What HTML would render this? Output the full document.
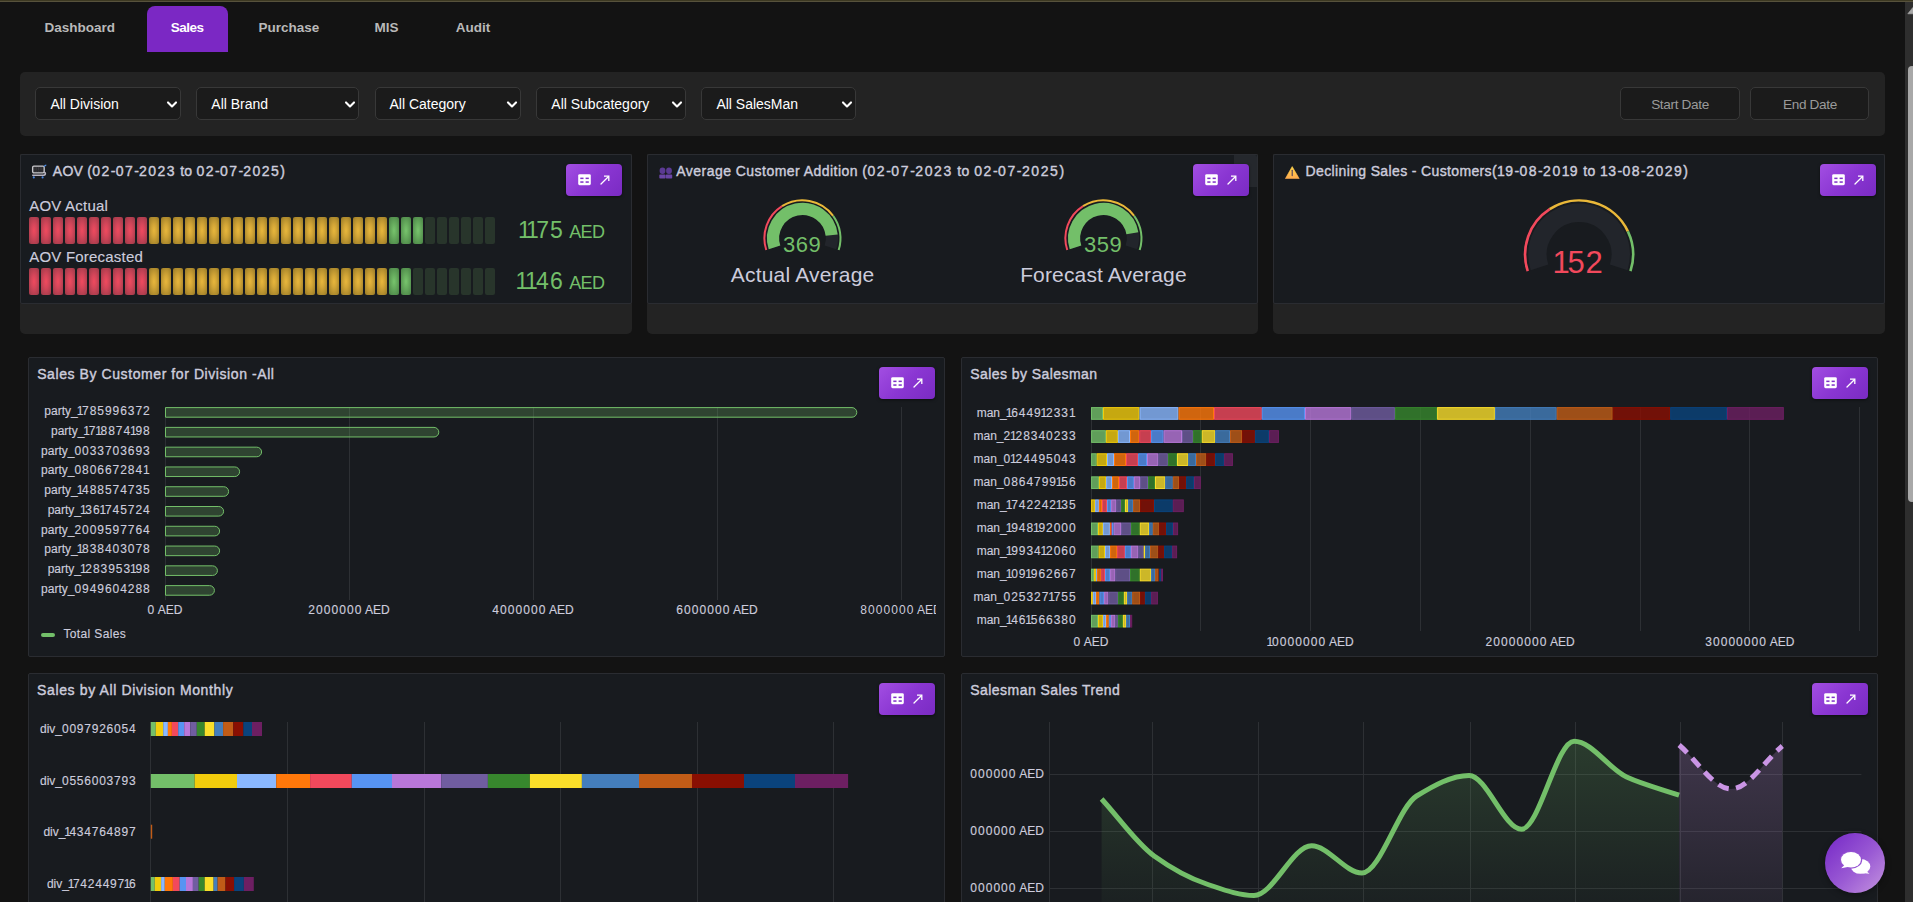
<!DOCTYPE html>
<html><head><meta charset="utf-8"><title>Sales</title>
<style>
*{box-sizing:border-box;margin:0;padding:0}
html,body{width:1913px;height:902px;overflow:hidden;background:#131313;font-family:"Liberation Sans",sans-serif}
.t{position:absolute;line-height:1;white-space:nowrap}
</style></head><body>

<div style="position:absolute;left:0.00px;top:0.00px;width:1913.00px;height:1.00px;background:#3d3922"></div>
<div style="position:absolute;left:0.00px;top:1.00px;width:1913.00px;height:1.00px;background:#57523c"></div>
<div class="t" style="left:-320.30px;width:800px;text-align:center;top:21.17px;font-size:13.5px;color:#b9b9b9;font-weight:bold;letter-spacing:0px;">Dashboard</div>
<div style="position:absolute;left:147.00px;top:6.00px;width:81.20px;height:46.00px;background:#7b28c4;border-radius:8px 8px 0 0"></div>
<div class="t" style="left:-212.90px;width:800px;text-align:center;top:21.17px;font-size:13.5px;color:#ffffff;font-weight:bold;letter-spacing:-0.5px;">Sales</div>
<div class="t" style="left:-111.00px;width:800px;text-align:center;top:21.17px;font-size:13.5px;color:#b9b9b9;font-weight:bold;letter-spacing:0px;">Purchase</div>
<div class="t" style="left:-13.50px;width:800px;text-align:center;top:21.17px;font-size:13.5px;color:#b9b9b9;font-weight:bold;letter-spacing:0px;">MIS</div>
<div class="t" style="left:73.00px;width:800px;text-align:center;top:21.17px;font-size:13.5px;color:#b9b9b9;font-weight:bold;letter-spacing:0px;">Audit</div>
<div style="position:absolute;left:20.00px;top:72.00px;width:1865.00px;height:63.50px;background:#232323;border-radius:5px"></div>
<div style="position:absolute;left:35.40px;top:87.40px;width:145.20px;height:33.00px;background:#1b1b1b;border:1px solid #383838;border-radius:5px"></div>
<div class="t" style="left:50.40px;top:97.45px;font-size:14px;color:#ffffff;font-weight:normal;letter-spacing:0px;">All Division</div>
<svg style="position:absolute;left:165.80px;top:99px" width="12" height="10" viewBox="0 0 12 10"><path d="M2 3.4 L6 7.4 L10 3.4" fill="none" stroke="#ffffff" stroke-width="2.1" stroke-linecap="round" stroke-linejoin="round"/></svg>
<div style="position:absolute;left:196.30px;top:87.40px;width:162.40px;height:33.00px;background:#1b1b1b;border:1px solid #383838;border-radius:5px"></div>
<div class="t" style="left:211.30px;top:97.45px;font-size:14px;color:#ffffff;font-weight:normal;letter-spacing:0px;">All Brand</div>
<svg style="position:absolute;left:343.90px;top:99px" width="12" height="10" viewBox="0 0 12 10"><path d="M2 3.4 L6 7.4 L10 3.4" fill="none" stroke="#ffffff" stroke-width="2.1" stroke-linecap="round" stroke-linejoin="round"/></svg>
<div style="position:absolute;left:374.50px;top:87.40px;width:146.50px;height:33.00px;background:#1b1b1b;border:1px solid #383838;border-radius:5px"></div>
<div class="t" style="left:389.50px;top:97.45px;font-size:14px;color:#ffffff;font-weight:normal;letter-spacing:0px;">All Category</div>
<svg style="position:absolute;left:506.20px;top:99px" width="12" height="10" viewBox="0 0 12 10"><path d="M2 3.4 L6 7.4 L10 3.4" fill="none" stroke="#ffffff" stroke-width="2.1" stroke-linecap="round" stroke-linejoin="round"/></svg>
<div style="position:absolute;left:536.30px;top:87.40px;width:149.30px;height:33.00px;background:#1b1b1b;border:1px solid #383838;border-radius:5px"></div>
<div class="t" style="left:551.30px;top:97.45px;font-size:14px;color:#ffffff;font-weight:normal;letter-spacing:0px;">All Subcategory</div>
<svg style="position:absolute;left:670.80px;top:99px" width="12" height="10" viewBox="0 0 12 10"><path d="M2 3.4 L6 7.4 L10 3.4" fill="none" stroke="#ffffff" stroke-width="2.1" stroke-linecap="round" stroke-linejoin="round"/></svg>
<div style="position:absolute;left:701.40px;top:87.40px;width:154.60px;height:33.00px;background:#1b1b1b;border:1px solid #383838;border-radius:5px"></div>
<div class="t" style="left:716.40px;top:97.45px;font-size:14px;color:#ffffff;font-weight:normal;letter-spacing:0px;">All SalesMan</div>
<svg style="position:absolute;left:841.20px;top:99px" width="12" height="10" viewBox="0 0 12 10"><path d="M2 3.4 L6 7.4 L10 3.4" fill="none" stroke="#ffffff" stroke-width="2.1" stroke-linecap="round" stroke-linejoin="round"/></svg>
<div style="position:absolute;left:1620.30px;top:87.40px;width:119.40px;height:33.00px;background:#1b1b1b;border:1px solid #383838;border-radius:5px"></div>
<div class="t" style="left:1280.00px;width:800px;text-align:center;top:97.99px;font-size:13.6px;color:#9a9a9a;font-weight:normal;letter-spacing:-0.35px;">Start Date</div>
<div style="position:absolute;left:1750.40px;top:87.40px;width:119.10px;height:33.00px;background:#1b1b1b;border:1px solid #383838;border-radius:5px"></div>
<div class="t" style="left:1409.95px;width:800px;text-align:center;top:97.99px;font-size:13.6px;color:#9a9a9a;font-weight:normal;letter-spacing:-0.35px;">End Date</div>
<div style="position:absolute;left:20.00px;top:154.20px;width:612.00px;height:179.80px;background:#232323;border-radius:0 0 5px 5px"></div>
<div style="position:absolute;left:20.00px;top:154.20px;width:612.00px;height:149.80px;background:#181b1f;border:1px solid #2a2c31;border-radius:2px"></div>
<div style="position:absolute;left:647.20px;top:154.20px;width:610.40px;height:179.80px;background:#232323;border-radius:0 0 5px 5px"></div>
<div style="position:absolute;left:647.20px;top:154.20px;width:610.40px;height:149.80px;background:#181b1f;border:1px solid #2a2c31;border-radius:2px"></div>
<div style="position:absolute;left:1273.00px;top:154.20px;width:612.00px;height:179.80px;background:#232323;border-radius:0 0 5px 5px"></div>
<div style="position:absolute;left:1273.00px;top:154.20px;width:612.00px;height:149.80px;background:#181b1f;border:1px solid #2a2c31;border-radius:2px"></div>
<svg style="position:absolute;left:30px;top:163px" width="18" height="17" viewBox="0 0 18 17"><rect x="2.6" y="3.2" width="11.6" height="6.6" rx="1.3" fill="#3a3a3e" stroke="#c8c8cc" stroke-width="1.3"/><path d="M5 4 V9 M7.4 4 V9 M9.8 4 V9 M12.2 4 V9" stroke="#2a2a2e" stroke-width="1.2"/><path d="M4.2 7.6 H12.6" stroke="#2a2a2e" stroke-width="0.9"/><path d="M14.2 3.2 L15.8 2.2" stroke="#4f8fe8" stroke-width="1.3" stroke-linecap="round"/><path d="M2.2 12.2 H13.6 Q15.6 12 15.4 10.4 Q15.2 9.2 14 9.4" fill="none" stroke="#b8b4c0" stroke-width="1.5"/><circle cx="3.8" cy="14.4" r="1.05" fill="#4a86e0"/><circle cx="12.6" cy="14.4" r="1.05" fill="#4a86e0"/></svg>
<div class="t" style="left:52.80px;top:164.05px;font-size:14px;color:#ccccdc;font-weight:normal;letter-spacing:0.28px;-webkit-text-stroke:0.4px #ccccdc;">AOV (<span style="margin-right:1.15px">0</span><span style="margin-right:1.15px">2</span>-<span style="margin-right:1.15px">0</span><span style="margin-right:1.15px">7</span>-<span style="margin-right:1.15px">2</span><span style="margin-right:1.15px">0</span><span style="margin-right:1.15px">2</span><span style="margin-right:1.15px">3</span> to <span style="margin-right:1.15px">0</span><span style="margin-right:1.15px">2</span>-<span style="margin-right:1.15px">0</span><span style="margin-right:1.15px">7</span>-<span style="margin-right:1.15px">2</span><span style="margin-right:1.15px">0</span><span style="margin-right:1.15px">2</span><span style="margin-right:1.15px">5</span>)</div>
<div style="position:absolute;left:566.00px;top:163.80px;width:56px;height:32px;border-radius:4px;background:linear-gradient(135deg,#a24ee2 0%,#8a36d2 50%,#7a2bc3 100%);box-shadow:0 1px 3px rgba(0,0,0,0.5)"></div>
<svg style="position:absolute;left:578.00px;top:173.80px" width="14" height="12" viewBox="0 0 14 12"><rect x="0.2" y="0.2" width="12.6" height="11" rx="1.4" fill="#fff"/><rect x="2.3" y="3.6" width="3.2" height="1.5" fill="#7f2fc9"/><rect x="7.6" y="3.6" width="3.2" height="1.5" fill="#7f2fc9"/><rect x="2.3" y="7.3" width="3.2" height="1.5" fill="#7f2fc9"/><rect x="7.6" y="7.3" width="3.2" height="1.5" fill="#7f2fc9"/></svg>
<svg style="position:absolute;left:600.00px;top:174.80px" width="10" height="10" viewBox="0 0 10 10"><path d="M1 9 L8.3 1.7" stroke="#fff" stroke-width="1.3" stroke-linecap="round"/><path d="M4 1.2 L8.8 1.2 L8.8 6" fill="none" stroke="#fff" stroke-width="1.3" stroke-linejoin="miter"/></svg>
<div class="t" style="left:29.30px;top:198.20px;font-size:15px;color:#ccccdc;font-weight:normal;letter-spacing:0.2px;-webkit-text-stroke:0.15px #ccccdc;">AOV Actual</div>
<div style="position:absolute;left:29px;top:217.00px;width:10px;height:27.00px;border-radius:2px;background:radial-gradient(ellipse 62% 58% at 50% 50%,#f04a5e 0%,#d6465a 40%,#a83c4c 100%)"></div>
<div style="position:absolute;left:41px;top:217.00px;width:10px;height:27.00px;border-radius:2px;background:radial-gradient(ellipse 62% 58% at 50% 50%,#f04a5e 0%,#d6465a 40%,#a83c4c 100%)"></div>
<div style="position:absolute;left:53px;top:217.00px;width:10px;height:27.00px;border-radius:2px;background:radial-gradient(ellipse 62% 58% at 50% 50%,#f04a5e 0%,#d6465a 40%,#a83c4c 100%)"></div>
<div style="position:absolute;left:65px;top:217.00px;width:10px;height:27.00px;border-radius:2px;background:radial-gradient(ellipse 62% 58% at 50% 50%,#f04a5e 0%,#d6465a 40%,#a83c4c 100%)"></div>
<div style="position:absolute;left:77px;top:217.00px;width:10px;height:27.00px;border-radius:2px;background:radial-gradient(ellipse 62% 58% at 50% 50%,#f04a5e 0%,#d6465a 40%,#a83c4c 100%)"></div>
<div style="position:absolute;left:89px;top:217.00px;width:10px;height:27.00px;border-radius:2px;background:radial-gradient(ellipse 62% 58% at 50% 50%,#f04a5e 0%,#d6465a 40%,#a83c4c 100%)"></div>
<div style="position:absolute;left:101px;top:217.00px;width:10px;height:27.00px;border-radius:2px;background:radial-gradient(ellipse 62% 58% at 50% 50%,#f04a5e 0%,#d6465a 40%,#a83c4c 100%)"></div>
<div style="position:absolute;left:113px;top:217.00px;width:10px;height:27.00px;border-radius:2px;background:radial-gradient(ellipse 62% 58% at 50% 50%,#f04a5e 0%,#d6465a 40%,#a83c4c 100%)"></div>
<div style="position:absolute;left:125px;top:217.00px;width:10px;height:27.00px;border-radius:2px;background:radial-gradient(ellipse 62% 58% at 50% 50%,#f04a5e 0%,#d6465a 40%,#a83c4c 100%)"></div>
<div style="position:absolute;left:137px;top:217.00px;width:10px;height:27.00px;border-radius:2px;background:radial-gradient(ellipse 62% 58% at 50% 50%,#f04a5e 0%,#d6465a 40%,#a83c4c 100%)"></div>
<div style="position:absolute;left:149px;top:217.00px;width:10px;height:27.00px;border-radius:2px;background:radial-gradient(ellipse 62% 58% at 50% 50%,#e8b73c 0%,#d2a536 40%,#a4832a 100%)"></div>
<div style="position:absolute;left:161px;top:217.00px;width:10px;height:27.00px;border-radius:2px;background:radial-gradient(ellipse 62% 58% at 50% 50%,#e8b73c 0%,#d2a536 40%,#a4832a 100%)"></div>
<div style="position:absolute;left:173px;top:217.00px;width:10px;height:27.00px;border-radius:2px;background:radial-gradient(ellipse 62% 58% at 50% 50%,#e8b73c 0%,#d2a536 40%,#a4832a 100%)"></div>
<div style="position:absolute;left:185px;top:217.00px;width:10px;height:27.00px;border-radius:2px;background:radial-gradient(ellipse 62% 58% at 50% 50%,#e8b73c 0%,#d2a536 40%,#a4832a 100%)"></div>
<div style="position:absolute;left:197px;top:217.00px;width:10px;height:27.00px;border-radius:2px;background:radial-gradient(ellipse 62% 58% at 50% 50%,#e8b73c 0%,#d2a536 40%,#a4832a 100%)"></div>
<div style="position:absolute;left:209px;top:217.00px;width:10px;height:27.00px;border-radius:2px;background:radial-gradient(ellipse 62% 58% at 50% 50%,#e8b73c 0%,#d2a536 40%,#a4832a 100%)"></div>
<div style="position:absolute;left:221px;top:217.00px;width:10px;height:27.00px;border-radius:2px;background:radial-gradient(ellipse 62% 58% at 50% 50%,#e8b73c 0%,#d2a536 40%,#a4832a 100%)"></div>
<div style="position:absolute;left:233px;top:217.00px;width:10px;height:27.00px;border-radius:2px;background:radial-gradient(ellipse 62% 58% at 50% 50%,#e8b73c 0%,#d2a536 40%,#a4832a 100%)"></div>
<div style="position:absolute;left:245px;top:217.00px;width:10px;height:27.00px;border-radius:2px;background:radial-gradient(ellipse 62% 58% at 50% 50%,#e8b73c 0%,#d2a536 40%,#a4832a 100%)"></div>
<div style="position:absolute;left:257px;top:217.00px;width:10px;height:27.00px;border-radius:2px;background:radial-gradient(ellipse 62% 58% at 50% 50%,#e8b73c 0%,#d2a536 40%,#a4832a 100%)"></div>
<div style="position:absolute;left:269px;top:217.00px;width:10px;height:27.00px;border-radius:2px;background:radial-gradient(ellipse 62% 58% at 50% 50%,#e8b73c 0%,#d2a536 40%,#a4832a 100%)"></div>
<div style="position:absolute;left:281px;top:217.00px;width:10px;height:27.00px;border-radius:2px;background:radial-gradient(ellipse 62% 58% at 50% 50%,#e8b73c 0%,#d2a536 40%,#a4832a 100%)"></div>
<div style="position:absolute;left:293px;top:217.00px;width:10px;height:27.00px;border-radius:2px;background:radial-gradient(ellipse 62% 58% at 50% 50%,#e8b73c 0%,#d2a536 40%,#a4832a 100%)"></div>
<div style="position:absolute;left:305px;top:217.00px;width:10px;height:27.00px;border-radius:2px;background:radial-gradient(ellipse 62% 58% at 50% 50%,#e8b73c 0%,#d2a536 40%,#a4832a 100%)"></div>
<div style="position:absolute;left:317px;top:217.00px;width:10px;height:27.00px;border-radius:2px;background:radial-gradient(ellipse 62% 58% at 50% 50%,#e8b73c 0%,#d2a536 40%,#a4832a 100%)"></div>
<div style="position:absolute;left:329px;top:217.00px;width:10px;height:27.00px;border-radius:2px;background:radial-gradient(ellipse 62% 58% at 50% 50%,#e8b73c 0%,#d2a536 40%,#a4832a 100%)"></div>
<div style="position:absolute;left:341px;top:217.00px;width:10px;height:27.00px;border-radius:2px;background:radial-gradient(ellipse 62% 58% at 50% 50%,#e8b73c 0%,#d2a536 40%,#a4832a 100%)"></div>
<div style="position:absolute;left:353px;top:217.00px;width:10px;height:27.00px;border-radius:2px;background:radial-gradient(ellipse 62% 58% at 50% 50%,#e8b73c 0%,#d2a536 40%,#a4832a 100%)"></div>
<div style="position:absolute;left:365px;top:217.00px;width:10px;height:27.00px;border-radius:2px;background:radial-gradient(ellipse 62% 58% at 50% 50%,#e8b73c 0%,#d2a536 40%,#a4832a 100%)"></div>
<div style="position:absolute;left:377px;top:217.00px;width:10px;height:27.00px;border-radius:2px;background:radial-gradient(ellipse 62% 58% at 50% 50%,#e8b73c 0%,#d2a536 40%,#a4832a 100%)"></div>
<div style="position:absolute;left:389px;top:217.00px;width:10px;height:27.00px;border-radius:2px;background:radial-gradient(ellipse 62% 58% at 50% 50%,#78c46d 0%,#68ae5f 40%,#508c4b 100%)"></div>
<div style="position:absolute;left:401px;top:217.00px;width:10px;height:27.00px;border-radius:2px;background:radial-gradient(ellipse 62% 58% at 50% 50%,#78c46d 0%,#68ae5f 40%,#508c4b 100%)"></div>
<div style="position:absolute;left:413px;top:217.00px;width:10px;height:27.00px;border-radius:2px;background:radial-gradient(ellipse 62% 58% at 50% 50%,#78c46d 0%,#68ae5f 40%,#508c4b 100%)"></div>
<div style="position:absolute;left:425px;top:217.00px;width:10px;height:27.00px;border-radius:2px;background:#28352b"></div>
<div style="position:absolute;left:437px;top:217.00px;width:10px;height:27.00px;border-radius:2px;background:#28352b"></div>
<div style="position:absolute;left:449px;top:217.00px;width:10px;height:27.00px;border-radius:2px;background:#28352b"></div>
<div style="position:absolute;left:461px;top:217.00px;width:10px;height:27.00px;border-radius:2px;background:#28352b"></div>
<div style="position:absolute;left:473px;top:217.00px;width:10px;height:27.00px;border-radius:2px;background:#28352b"></div>
<div style="position:absolute;left:485px;top:217.00px;width:10px;height:27.00px;border-radius:2px;background:#28352b"></div>
<div class="t" style="right:1350.20px;top:218.53px;font-size:23px;color:#73BF69;font-weight:normal;letter-spacing:0px;"><span style="margin-left:-2.12px;margin-right:-2.59px">1</span><span style="margin-left:-2.12px;margin-right:-2.59px">1</span><span style="margin-right:1.0px">7</span>5</div>
<div class="t" style="right:1308.60px;top:222.76px;font-size:18px;color:#73BF69;font-weight:normal;letter-spacing:-0.6px;">AED</div>
<div class="t" style="left:29.30px;top:249.30px;font-size:15px;color:#ccccdc;font-weight:normal;letter-spacing:0.2px;-webkit-text-stroke:0.15px #ccccdc;">AOV Forecasted</div>
<div style="position:absolute;left:29px;top:268.20px;width:10px;height:26.60px;border-radius:2px;background:radial-gradient(ellipse 62% 58% at 50% 50%,#f04a5e 0%,#d6465a 40%,#a83c4c 100%)"></div>
<div style="position:absolute;left:41px;top:268.20px;width:10px;height:26.60px;border-radius:2px;background:radial-gradient(ellipse 62% 58% at 50% 50%,#f04a5e 0%,#d6465a 40%,#a83c4c 100%)"></div>
<div style="position:absolute;left:53px;top:268.20px;width:10px;height:26.60px;border-radius:2px;background:radial-gradient(ellipse 62% 58% at 50% 50%,#f04a5e 0%,#d6465a 40%,#a83c4c 100%)"></div>
<div style="position:absolute;left:65px;top:268.20px;width:10px;height:26.60px;border-radius:2px;background:radial-gradient(ellipse 62% 58% at 50% 50%,#f04a5e 0%,#d6465a 40%,#a83c4c 100%)"></div>
<div style="position:absolute;left:77px;top:268.20px;width:10px;height:26.60px;border-radius:2px;background:radial-gradient(ellipse 62% 58% at 50% 50%,#f04a5e 0%,#d6465a 40%,#a83c4c 100%)"></div>
<div style="position:absolute;left:89px;top:268.20px;width:10px;height:26.60px;border-radius:2px;background:radial-gradient(ellipse 62% 58% at 50% 50%,#f04a5e 0%,#d6465a 40%,#a83c4c 100%)"></div>
<div style="position:absolute;left:101px;top:268.20px;width:10px;height:26.60px;border-radius:2px;background:radial-gradient(ellipse 62% 58% at 50% 50%,#f04a5e 0%,#d6465a 40%,#a83c4c 100%)"></div>
<div style="position:absolute;left:113px;top:268.20px;width:10px;height:26.60px;border-radius:2px;background:radial-gradient(ellipse 62% 58% at 50% 50%,#f04a5e 0%,#d6465a 40%,#a83c4c 100%)"></div>
<div style="position:absolute;left:125px;top:268.20px;width:10px;height:26.60px;border-radius:2px;background:radial-gradient(ellipse 62% 58% at 50% 50%,#f04a5e 0%,#d6465a 40%,#a83c4c 100%)"></div>
<div style="position:absolute;left:137px;top:268.20px;width:10px;height:26.60px;border-radius:2px;background:radial-gradient(ellipse 62% 58% at 50% 50%,#f04a5e 0%,#d6465a 40%,#a83c4c 100%)"></div>
<div style="position:absolute;left:149px;top:268.20px;width:10px;height:26.60px;border-radius:2px;background:radial-gradient(ellipse 62% 58% at 50% 50%,#e8b73c 0%,#d2a536 40%,#a4832a 100%)"></div>
<div style="position:absolute;left:161px;top:268.20px;width:10px;height:26.60px;border-radius:2px;background:radial-gradient(ellipse 62% 58% at 50% 50%,#e8b73c 0%,#d2a536 40%,#a4832a 100%)"></div>
<div style="position:absolute;left:173px;top:268.20px;width:10px;height:26.60px;border-radius:2px;background:radial-gradient(ellipse 62% 58% at 50% 50%,#e8b73c 0%,#d2a536 40%,#a4832a 100%)"></div>
<div style="position:absolute;left:185px;top:268.20px;width:10px;height:26.60px;border-radius:2px;background:radial-gradient(ellipse 62% 58% at 50% 50%,#e8b73c 0%,#d2a536 40%,#a4832a 100%)"></div>
<div style="position:absolute;left:197px;top:268.20px;width:10px;height:26.60px;border-radius:2px;background:radial-gradient(ellipse 62% 58% at 50% 50%,#e8b73c 0%,#d2a536 40%,#a4832a 100%)"></div>
<div style="position:absolute;left:209px;top:268.20px;width:10px;height:26.60px;border-radius:2px;background:radial-gradient(ellipse 62% 58% at 50% 50%,#e8b73c 0%,#d2a536 40%,#a4832a 100%)"></div>
<div style="position:absolute;left:221px;top:268.20px;width:10px;height:26.60px;border-radius:2px;background:radial-gradient(ellipse 62% 58% at 50% 50%,#e8b73c 0%,#d2a536 40%,#a4832a 100%)"></div>
<div style="position:absolute;left:233px;top:268.20px;width:10px;height:26.60px;border-radius:2px;background:radial-gradient(ellipse 62% 58% at 50% 50%,#e8b73c 0%,#d2a536 40%,#a4832a 100%)"></div>
<div style="position:absolute;left:245px;top:268.20px;width:10px;height:26.60px;border-radius:2px;background:radial-gradient(ellipse 62% 58% at 50% 50%,#e8b73c 0%,#d2a536 40%,#a4832a 100%)"></div>
<div style="position:absolute;left:257px;top:268.20px;width:10px;height:26.60px;border-radius:2px;background:radial-gradient(ellipse 62% 58% at 50% 50%,#e8b73c 0%,#d2a536 40%,#a4832a 100%)"></div>
<div style="position:absolute;left:269px;top:268.20px;width:10px;height:26.60px;border-radius:2px;background:radial-gradient(ellipse 62% 58% at 50% 50%,#e8b73c 0%,#d2a536 40%,#a4832a 100%)"></div>
<div style="position:absolute;left:281px;top:268.20px;width:10px;height:26.60px;border-radius:2px;background:radial-gradient(ellipse 62% 58% at 50% 50%,#e8b73c 0%,#d2a536 40%,#a4832a 100%)"></div>
<div style="position:absolute;left:293px;top:268.20px;width:10px;height:26.60px;border-radius:2px;background:radial-gradient(ellipse 62% 58% at 50% 50%,#e8b73c 0%,#d2a536 40%,#a4832a 100%)"></div>
<div style="position:absolute;left:305px;top:268.20px;width:10px;height:26.60px;border-radius:2px;background:radial-gradient(ellipse 62% 58% at 50% 50%,#e8b73c 0%,#d2a536 40%,#a4832a 100%)"></div>
<div style="position:absolute;left:317px;top:268.20px;width:10px;height:26.60px;border-radius:2px;background:radial-gradient(ellipse 62% 58% at 50% 50%,#e8b73c 0%,#d2a536 40%,#a4832a 100%)"></div>
<div style="position:absolute;left:329px;top:268.20px;width:10px;height:26.60px;border-radius:2px;background:radial-gradient(ellipse 62% 58% at 50% 50%,#e8b73c 0%,#d2a536 40%,#a4832a 100%)"></div>
<div style="position:absolute;left:341px;top:268.20px;width:10px;height:26.60px;border-radius:2px;background:radial-gradient(ellipse 62% 58% at 50% 50%,#e8b73c 0%,#d2a536 40%,#a4832a 100%)"></div>
<div style="position:absolute;left:353px;top:268.20px;width:10px;height:26.60px;border-radius:2px;background:radial-gradient(ellipse 62% 58% at 50% 50%,#e8b73c 0%,#d2a536 40%,#a4832a 100%)"></div>
<div style="position:absolute;left:365px;top:268.20px;width:10px;height:26.60px;border-radius:2px;background:radial-gradient(ellipse 62% 58% at 50% 50%,#e8b73c 0%,#d2a536 40%,#a4832a 100%)"></div>
<div style="position:absolute;left:377px;top:268.20px;width:10px;height:26.60px;border-radius:2px;background:radial-gradient(ellipse 62% 58% at 50% 50%,#e8b73c 0%,#d2a536 40%,#a4832a 100%)"></div>
<div style="position:absolute;left:389px;top:268.20px;width:10px;height:26.60px;border-radius:2px;background:radial-gradient(ellipse 62% 58% at 50% 50%,#78c46d 0%,#68ae5f 40%,#508c4b 100%)"></div>
<div style="position:absolute;left:401px;top:268.20px;width:10px;height:26.60px;border-radius:2px;background:radial-gradient(ellipse 62% 58% at 50% 50%,#78c46d 0%,#68ae5f 40%,#508c4b 100%)"></div>
<div style="position:absolute;left:413px;top:268.20px;width:10px;height:26.60px;border-radius:2px;background:#28352b"></div>
<div style="position:absolute;left:425px;top:268.20px;width:10px;height:26.60px;border-radius:2px;background:#28352b"></div>
<div style="position:absolute;left:437px;top:268.20px;width:10px;height:26.60px;border-radius:2px;background:#28352b"></div>
<div style="position:absolute;left:449px;top:268.20px;width:10px;height:26.60px;border-radius:2px;background:#28352b"></div>
<div style="position:absolute;left:461px;top:268.20px;width:10px;height:26.60px;border-radius:2px;background:#28352b"></div>
<div style="position:absolute;left:473px;top:268.20px;width:10px;height:26.60px;border-radius:2px;background:#28352b"></div>
<div style="position:absolute;left:485px;top:268.20px;width:10px;height:26.60px;border-radius:2px;background:#28352b"></div>
<div class="t" style="right:1350.20px;top:269.83px;font-size:23px;color:#73BF69;font-weight:normal;letter-spacing:0px;"><span style="margin-left:-1.44px;margin-right:-1.76px">1</span><span style="margin-left:-1.44px;margin-right:-1.76px">1</span><span style="margin-right:1.2px">4</span>6</div>
<div class="t" style="right:1308.60px;top:274.06px;font-size:18px;color:#73BF69;font-weight:normal;letter-spacing:-0.6px;">AED</div>
<svg style="position:absolute;left:659px;top:166.5px" width="14" height="12" viewBox="0 0 14 12"><ellipse cx="3.5" cy="3.8" rx="2.9" ry="3.3" fill="#5b3a93"/><ellipse cx="10" cy="3.8" rx="2.9" ry="3.3" fill="#5b3a93"/><rect x="0.3" y="7.6" width="6.3" height="4" rx="0.8" fill="#6a45a6"/><rect x="6.8" y="7.6" width="6.4" height="4" rx="0.8" fill="#6a45a6"/></svg>
<div class="t" style="left:676.30px;top:164.05px;font-size:14px;color:#ccccdc;font-weight:normal;letter-spacing:0.46px;-webkit-text-stroke:0.4px #ccccdc;">Average Customer Addition (<span style="margin-right:1.15px">0</span><span style="margin-right:1.15px">2</span>-<span style="margin-right:1.15px">0</span><span style="margin-right:1.15px">7</span>-<span style="margin-right:1.15px">2</span><span style="margin-right:1.15px">0</span><span style="margin-right:1.15px">2</span><span style="margin-right:1.15px">3</span> to <span style="margin-right:1.15px">0</span><span style="margin-right:1.15px">2</span>-<span style="margin-right:1.15px">0</span><span style="margin-right:1.15px">7</span>-<span style="margin-right:1.15px">2</span><span style="margin-right:1.15px">0</span><span style="margin-right:1.15px">2</span><span style="margin-right:1.15px">5</span>)</div>
<div style="position:absolute;left:1234.00px;top:155.00px;width:23.00px;height:31.60px;background:#25282d;border-radius:0 2px 0 0"></div>
<div style="position:absolute;left:1193.00px;top:164.00px;width:56px;height:32px;border-radius:4px;background:linear-gradient(135deg,#a24ee2 0%,#8a36d2 50%,#7a2bc3 100%);box-shadow:0 1px 3px rgba(0,0,0,0.5)"></div>
<svg style="position:absolute;left:1205.00px;top:174.00px" width="14" height="12" viewBox="0 0 14 12"><rect x="0.2" y="0.2" width="12.6" height="11" rx="1.4" fill="#fff"/><rect x="2.3" y="3.6" width="3.2" height="1.5" fill="#7f2fc9"/><rect x="7.6" y="3.6" width="3.2" height="1.5" fill="#7f2fc9"/><rect x="2.3" y="7.3" width="3.2" height="1.5" fill="#7f2fc9"/><rect x="7.6" y="7.3" width="3.2" height="1.5" fill="#7f2fc9"/></svg>
<svg style="position:absolute;left:1227.00px;top:175.00px" width="10" height="10" viewBox="0 0 10 10"><path d="M1 9 L8.3 1.7" stroke="#fff" stroke-width="1.3" stroke-linecap="round"/><path d="M4 1.2 L8.8 1.2 L8.8 6" fill="none" stroke="#fff" stroke-width="1.3" stroke-linejoin="miter"/></svg>
<svg style="position:absolute;left:0;top:0" width="1913" height="902"><path d="M766.26 250.06 A38.05 38.05 0 0 1 782.01 206.21" fill="none" stroke="#F2495C" stroke-width="2.0"/><path d="M782.01 206.21 A38.05 38.05 0 0 1 833.15 215.83" fill="none" stroke="#EAB839" stroke-width="2.0"/><path d="M833.15 215.83 A38.05 38.05 0 0 1 838.64 250.06" fill="none" stroke="#73BF69" stroke-width="2.0"/><path d="M774.51 247.38 A29.375 29.375 0 1 1 830.39 247.38" fill="none" stroke="#22252b" stroke-width="12.149999999999995"/><path d="M774.51 247.38 A29.375 29.375 0 1 1 831.66 235.23" fill="none" stroke="#73BF69" stroke-width="12.149999999999995"/></svg>
<svg style="position:absolute;left:0;top:0" width="1913" height="902"><path d="M1067.26 250.06 A38.05 38.05 0 0 1 1083.01 206.21" fill="none" stroke="#F2495C" stroke-width="2.0"/><path d="M1083.01 206.21 A38.05 38.05 0 0 1 1134.15 215.83" fill="none" stroke="#EAB839" stroke-width="2.0"/><path d="M1134.15 215.83 A38.05 38.05 0 0 1 1139.64 250.06" fill="none" stroke="#73BF69" stroke-width="2.0"/><path d="M1075.51 247.38 A29.375 29.375 0 1 1 1131.39 247.38" fill="none" stroke="#22252b" stroke-width="12.149999999999995"/><path d="M1075.51 247.38 A29.375 29.375 0 1 1 1132.38 233.20" fill="none" stroke="#73BF69" stroke-width="12.149999999999995"/></svg>
<div class="t" style="left:402.20px;width:800px;text-align:center;top:234.28px;font-size:22px;color:#73BF69;font-weight:normal;letter-spacing:0.5px;">369</div>
<div class="t" style="left:703.20px;width:800px;text-align:center;top:234.28px;font-size:22px;color:#73BF69;font-weight:normal;letter-spacing:0.5px;">359</div>
<div class="t" style="left:402.60px;width:800px;text-align:center;top:264.42px;font-size:21px;color:#ccccdc;font-weight:normal;letter-spacing:0.2px;">Actual Average</div>
<div class="t" style="left:703.45px;width:800px;text-align:center;top:264.42px;font-size:21px;color:#ccccdc;font-weight:normal;letter-spacing:0.15px;">Forecast Average</div>
<svg style="position:absolute;left:1284.5px;top:165.5px" width="15" height="13" viewBox="0 0 15 13"><defs><linearGradient id="wg" x1="0" y1="0" x2="0" y2="1"><stop offset="0" stop-color="#ffd54a"/><stop offset="1" stop-color="#ffab4f"/></linearGradient></defs><path d="M7.2 0.6 L14.2 12.6 H0.4 Z" fill="url(#wg)" stroke="url(#wg)" stroke-width="0.6" stroke-linejoin="round"/><path d="M7.2 4.2 V9.6" stroke="#4a3d5c" stroke-width="1.1" stroke-linecap="round"/></svg>
<div class="t" style="left:1305.60px;top:164.05px;font-size:14px;color:#ccccdc;font-weight:normal;letter-spacing:0.36px;-webkit-text-stroke:0.4px #ccccdc;">Declining Sales - Customers(<span style="margin-left:0.00px;margin-right:0.00px">1</span><span style="margin-right:1.15px">9</span>-<span style="margin-right:1.15px">0</span><span style="margin-right:1.15px">8</span>-<span style="margin-right:1.15px">2</span><span style="margin-right:1.15px">0</span><span style="margin-left:0.00px;margin-right:0.00px">1</span><span style="margin-right:1.15px">9</span> to <span style="margin-left:0.00px;margin-right:0.00px">1</span><span style="margin-right:1.15px">3</span>-<span style="margin-right:1.15px">0</span><span style="margin-right:1.15px">8</span>-<span style="margin-right:1.15px">2</span><span style="margin-right:1.15px">0</span><span style="margin-right:1.15px">2</span><span style="margin-right:1.15px">9</span>)</div>
<div style="position:absolute;left:1820.00px;top:163.80px;width:56px;height:32px;border-radius:4px;background:linear-gradient(135deg,#a24ee2 0%,#8a36d2 50%,#7a2bc3 100%);box-shadow:0 1px 3px rgba(0,0,0,0.5)"></div>
<svg style="position:absolute;left:1832.00px;top:173.80px" width="14" height="12" viewBox="0 0 14 12"><rect x="0.2" y="0.2" width="12.6" height="11" rx="1.4" fill="#fff"/><rect x="2.3" y="3.6" width="3.2" height="1.5" fill="#7f2fc9"/><rect x="7.6" y="3.6" width="3.2" height="1.5" fill="#7f2fc9"/><rect x="2.3" y="7.3" width="3.2" height="1.5" fill="#7f2fc9"/><rect x="7.6" y="7.3" width="3.2" height="1.5" fill="#7f2fc9"/></svg>
<svg style="position:absolute;left:1854.00px;top:174.80px" width="10" height="10" viewBox="0 0 10 10"><path d="M1 9 L8.3 1.7" stroke="#fff" stroke-width="1.3" stroke-linecap="round"/><path d="M4 1.2 L8.8 1.2 L8.8 6" fill="none" stroke="#fff" stroke-width="1.3" stroke-linejoin="miter"/></svg>
<svg style="position:absolute;left:0;top:0" width="1913" height="902"><path d="M1527.74 271.19 A54.0 54.0 0 0 1 1549.69 209.21" fill="none" stroke="#F2495C" stroke-width="2.6"/><path d="M1549.69 209.21 A54.0 54.0 0 0 1 1627.88 231.34" fill="none" stroke="#EAB839" stroke-width="2.6"/><path d="M1627.88 231.34 A54.0 54.0 0 0 1 1630.46 271.19" fill="none" stroke="#73BF69" stroke-width="2.6"/><path d="M1539.49 267.37 A41.65 41.65 0 1 1 1618.71 267.37" fill="none" stroke="#22252b" stroke-width="18.5"/></svg>
<div class="t" style="left:1178.50px;width:800px;text-align:center;top:247.46px;font-size:31px;color:#F2495C;font-weight:normal;letter-spacing:0px;"><span style="margin-left:-1.80px;margin-right:-2.20px">1</span><span style="margin-right:0.6px">5</span>2</div>
<div style="position:absolute;left:28.00px;top:357.10px;width:917.00px;height:299.90px;background:#181b1f;border:1px solid #2a2c31;border-radius:2px"></div>
<div style="position:absolute;left:961.20px;top:357.10px;width:916.60px;height:299.90px;background:#181b1f;border:1px solid #2a2c31;border-radius:2px"></div>
<div style="position:absolute;left:28.40px;top:673.40px;width:916.60px;height:246.60px;background:#181b1f;border:1px solid #2a2c31;border-radius:2px"></div>
<div style="position:absolute;left:961.20px;top:673.40px;width:916.60px;height:246.60px;background:#181b1f;border:1px solid #2a2c31;border-radius:2px"></div>
<div class="t" style="left:37.20px;top:367.45px;font-size:14px;color:#ccccdc;font-weight:normal;letter-spacing:0.58px;-webkit-text-stroke:0.4px #ccccdc;">Sales By Customer for Division -All</div>
<div style="position:absolute;left:879.00px;top:366.80px;width:56px;height:32px;border-radius:4px;background:linear-gradient(135deg,#a24ee2 0%,#8a36d2 50%,#7a2bc3 100%);box-shadow:0 1px 3px rgba(0,0,0,0.5)"></div>
<svg style="position:absolute;left:891.00px;top:376.80px" width="14" height="12" viewBox="0 0 14 12"><rect x="0.2" y="0.2" width="12.6" height="11" rx="1.4" fill="#fff"/><rect x="2.3" y="3.6" width="3.2" height="1.5" fill="#7f2fc9"/><rect x="7.6" y="3.6" width="3.2" height="1.5" fill="#7f2fc9"/><rect x="2.3" y="7.3" width="3.2" height="1.5" fill="#7f2fc9"/><rect x="7.6" y="7.3" width="3.2" height="1.5" fill="#7f2fc9"/></svg>
<svg style="position:absolute;left:913.00px;top:377.80px" width="10" height="10" viewBox="0 0 10 10"><path d="M1 9 L8.3 1.7" stroke="#fff" stroke-width="1.3" stroke-linecap="round"/><path d="M4 1.2 L8.8 1.2 L8.8 6" fill="none" stroke="#fff" stroke-width="1.3" stroke-linejoin="miter"/></svg>
<svg style="position:absolute;left:0;top:0" width="1913" height="902"><rect x="165" y="407" width="1" height="193" fill="#2d3034"/><rect x="349" y="407" width="1" height="193" fill="#2d3034"/><rect x="533" y="407" width="1" height="193" fill="#2d3034"/><rect x="717" y="407" width="1" height="193" fill="#2d3034"/><rect x="901" y="407" width="1" height="193" fill="#2d3034"/><path d="M165.5 407.6 H852.00 A4.5 4.5 0 0 1 852.00 417.20 H165.5 Z" fill="rgba(115,191,105,0.25)" stroke="#73BF69" stroke-width="1"/><path d="M165.5 427.38 H434.00 A4.5 4.5 0 0 1 434.00 436.98 H165.5 Z" fill="rgba(115,191,105,0.25)" stroke="#73BF69" stroke-width="1"/><path d="M165.5 447.16 H256.80 A4.5 4.5 0 0 1 256.80 456.76 H165.5 Z" fill="rgba(115,191,105,0.25)" stroke="#73BF69" stroke-width="1"/><path d="M165.5 466.94000000000005 H234.80 A4.5 4.5 0 0 1 234.80 476.54 H165.5 Z" fill="rgba(115,191,105,0.25)" stroke="#73BF69" stroke-width="1"/><path d="M165.5 486.72 H223.80 A4.5 4.5 0 0 1 223.80 496.32 H165.5 Z" fill="rgba(115,191,105,0.25)" stroke="#73BF69" stroke-width="1"/><path d="M165.5 506.5 H218.80 A4.5 4.5 0 0 1 218.80 516.10 H165.5 Z" fill="rgba(115,191,105,0.25)" stroke="#73BF69" stroke-width="1"/><path d="M165.5 526.28 H214.80 A4.5 4.5 0 0 1 214.80 535.88 H165.5 Z" fill="rgba(115,191,105,0.25)" stroke="#73BF69" stroke-width="1"/><path d="M165.5 546.0600000000001 H214.80 A4.5 4.5 0 0 1 214.80 555.66 H165.5 Z" fill="rgba(115,191,105,0.25)" stroke="#73BF69" stroke-width="1"/><path d="M165.5 565.84 H212.60 A4.5 4.5 0 0 1 212.60 575.44 H165.5 Z" fill="rgba(115,191,105,0.25)" stroke="#73BF69" stroke-width="1"/><path d="M165.5 585.62 H209.60 A4.5 4.5 0 0 1 209.60 595.22 H165.5 Z" fill="rgba(115,191,105,0.25)" stroke="#73BF69" stroke-width="1"/></svg>
<div class="t" style="right:1763.30px;top:404.94px;font-size:12px;color:#ccccdc;font-weight:normal;letter-spacing:0px;-webkit-text-stroke:0.15px #ccccdc;">party_<span style="margin-left:-1.08px;margin-right:-1.32px">1</span><span style="margin-right:0.95px">7</span><span style="margin-right:0.95px">8</span><span style="margin-right:0.95px">5</span><span style="margin-right:0.95px">9</span><span style="margin-right:0.95px">9</span><span style="margin-right:0.95px">6</span><span style="margin-right:0.95px">3</span><span style="margin-right:0.95px">7</span>2</div>
<div class="t" style="right:1763.30px;top:424.72px;font-size:12px;color:#ccccdc;font-weight:normal;letter-spacing:0px;-webkit-text-stroke:0.15px #ccccdc;">party_<span style="margin-left:-1.08px;margin-right:-1.32px">1</span><span style="margin-right:0.95px">7</span><span style="margin-left:-1.08px;margin-right:-1.32px">1</span><span style="margin-right:0.95px">8</span><span style="margin-right:0.95px">8</span><span style="margin-right:0.95px">7</span><span style="margin-right:0.95px">4</span><span style="margin-left:-1.08px;margin-right:-1.32px">1</span><span style="margin-right:0.95px">9</span>8</div>
<div class="t" style="right:1763.30px;top:444.50px;font-size:12px;color:#ccccdc;font-weight:normal;letter-spacing:0px;-webkit-text-stroke:0.15px #ccccdc;">party_<span style="margin-right:0.95px">0</span><span style="margin-right:0.95px">0</span><span style="margin-right:0.95px">3</span><span style="margin-right:0.95px">3</span><span style="margin-right:0.95px">7</span><span style="margin-right:0.95px">0</span><span style="margin-right:0.95px">3</span><span style="margin-right:0.95px">6</span><span style="margin-right:0.95px">9</span>3</div>
<div class="t" style="right:1763.30px;top:464.28px;font-size:12px;color:#ccccdc;font-weight:normal;letter-spacing:0px;-webkit-text-stroke:0.15px #ccccdc;">party_<span style="margin-right:0.95px">0</span><span style="margin-right:0.95px">8</span><span style="margin-right:0.95px">0</span><span style="margin-right:0.95px">6</span><span style="margin-right:0.95px">6</span><span style="margin-right:0.95px">7</span><span style="margin-right:0.95px">2</span><span style="margin-right:0.95px">8</span><span style="margin-right:0.95px">4</span>1</div>
<div class="t" style="right:1763.30px;top:484.06px;font-size:12px;color:#ccccdc;font-weight:normal;letter-spacing:0px;-webkit-text-stroke:0.15px #ccccdc;">party_<span style="margin-left:-1.08px;margin-right:-1.32px">1</span><span style="margin-right:0.95px">4</span><span style="margin-right:0.95px">8</span><span style="margin-right:0.95px">8</span><span style="margin-right:0.95px">5</span><span style="margin-right:0.95px">7</span><span style="margin-right:0.95px">4</span><span style="margin-right:0.95px">7</span><span style="margin-right:0.95px">3</span>5</div>
<div class="t" style="right:1763.30px;top:503.84px;font-size:12px;color:#ccccdc;font-weight:normal;letter-spacing:0px;-webkit-text-stroke:0.15px #ccccdc;">party_<span style="margin-left:-1.08px;margin-right:-1.32px">1</span><span style="margin-right:0.95px">3</span><span style="margin-right:0.95px">6</span><span style="margin-left:-1.08px;margin-right:-1.32px">1</span><span style="margin-right:0.95px">7</span><span style="margin-right:0.95px">4</span><span style="margin-right:0.95px">5</span><span style="margin-right:0.95px">7</span><span style="margin-right:0.95px">2</span>4</div>
<div class="t" style="right:1763.30px;top:523.62px;font-size:12px;color:#ccccdc;font-weight:normal;letter-spacing:0px;-webkit-text-stroke:0.15px #ccccdc;">party_<span style="margin-right:0.95px">2</span><span style="margin-right:0.95px">0</span><span style="margin-right:0.95px">0</span><span style="margin-right:0.95px">9</span><span style="margin-right:0.95px">5</span><span style="margin-right:0.95px">9</span><span style="margin-right:0.95px">7</span><span style="margin-right:0.95px">7</span><span style="margin-right:0.95px">6</span>4</div>
<div class="t" style="right:1763.30px;top:543.40px;font-size:12px;color:#ccccdc;font-weight:normal;letter-spacing:0px;-webkit-text-stroke:0.15px #ccccdc;">party_<span style="margin-left:-1.08px;margin-right:-1.32px">1</span><span style="margin-right:0.95px">8</span><span style="margin-right:0.95px">3</span><span style="margin-right:0.95px">8</span><span style="margin-right:0.95px">4</span><span style="margin-right:0.95px">0</span><span style="margin-right:0.95px">3</span><span style="margin-right:0.95px">0</span><span style="margin-right:0.95px">7</span>8</div>
<div class="t" style="right:1763.30px;top:563.18px;font-size:12px;color:#ccccdc;font-weight:normal;letter-spacing:0px;-webkit-text-stroke:0.15px #ccccdc;">party_<span style="margin-left:-1.08px;margin-right:-1.32px">1</span><span style="margin-right:0.95px">2</span><span style="margin-right:0.95px">8</span><span style="margin-right:0.95px">3</span><span style="margin-right:0.95px">9</span><span style="margin-right:0.95px">5</span><span style="margin-right:0.95px">3</span><span style="margin-left:-1.08px;margin-right:-1.32px">1</span><span style="margin-right:0.95px">9</span>8</div>
<div class="t" style="right:1763.30px;top:582.96px;font-size:12px;color:#ccccdc;font-weight:normal;letter-spacing:0px;-webkit-text-stroke:0.15px #ccccdc;">party_<span style="margin-right:0.95px">0</span><span style="margin-right:0.95px">9</span><span style="margin-right:0.95px">4</span><span style="margin-right:0.95px">9</span><span style="margin-right:0.95px">6</span><span style="margin-right:0.95px">0</span><span style="margin-right:0.95px">4</span><span style="margin-right:0.95px">2</span><span style="margin-right:0.95px">8</span>8</div>
<div class="t" style="left:-235.00px;width:800px;text-align:center;top:603.94px;font-size:12px;color:#ccccdc;font-weight:normal;letter-spacing:0px;-webkit-text-stroke:0.15px #ccccdc;"><span style="margin-right:1.05px">0</span> AED</div>
<div class="t" style="left:-51.00px;width:800px;text-align:center;top:603.94px;font-size:12px;color:#ccccdc;font-weight:normal;letter-spacing:0px;-webkit-text-stroke:0.15px #ccccdc;"><span style="margin-right:1.05px">2</span><span style="margin-right:1.05px">0</span><span style="margin-right:1.05px">0</span><span style="margin-right:1.05px">0</span><span style="margin-right:1.05px">0</span><span style="margin-right:1.05px">0</span><span style="margin-right:1.05px">0</span> AED</div>
<div class="t" style="left:133.00px;width:800px;text-align:center;top:603.94px;font-size:12px;color:#ccccdc;font-weight:normal;letter-spacing:0px;-webkit-text-stroke:0.15px #ccccdc;"><span style="margin-right:1.05px">4</span><span style="margin-right:1.05px">0</span><span style="margin-right:1.05px">0</span><span style="margin-right:1.05px">0</span><span style="margin-right:1.05px">0</span><span style="margin-right:1.05px">0</span><span style="margin-right:1.05px">0</span> AED</div>
<div class="t" style="left:317.00px;width:800px;text-align:center;top:603.94px;font-size:12px;color:#ccccdc;font-weight:normal;letter-spacing:0px;-webkit-text-stroke:0.15px #ccccdc;"><span style="margin-right:1.05px">6</span><span style="margin-right:1.05px">0</span><span style="margin-right:1.05px">0</span><span style="margin-right:1.05px">0</span><span style="margin-right:1.05px">0</span><span style="margin-right:1.05px">0</span><span style="margin-right:1.05px">0</span> AED</div>
<div style="position:absolute;left:840px;top:600px;width:96px;height:20px;overflow:hidden">
<div class="t" style="left:-339.00px;width:800px;text-align:center;top:3.94px;font-size:12px;color:#ccccdc"><span style="margin-right:1.05px">8</span><span style="margin-right:1.05px">0</span><span style="margin-right:1.05px">0</span><span style="margin-right:1.05px">0</span><span style="margin-right:1.05px">0</span><span style="margin-right:1.05px">0</span><span style="margin-right:1.05px">0</span> AED</div>
</div>
<div style="position:absolute;left:41.00px;top:633.10px;width:14.00px;height:3.90px;background:#73BF69;border-radius:2px"></div>
<div class="t" style="left:63.50px;top:627.94px;font-size:12px;color:#ccccdc;font-weight:normal;letter-spacing:0.35px;-webkit-text-stroke:0.15px #ccccdc;">Total Sales</div>
<div class="t" style="left:970.30px;top:367.45px;font-size:14px;color:#ccccdc;font-weight:normal;letter-spacing:0.43px;-webkit-text-stroke:0.4px #ccccdc;">Sales by Salesman</div>
<div style="position:absolute;left:1812.00px;top:366.80px;width:56px;height:32px;border-radius:4px;background:linear-gradient(135deg,#a24ee2 0%,#8a36d2 50%,#7a2bc3 100%);box-shadow:0 1px 3px rgba(0,0,0,0.5)"></div>
<svg style="position:absolute;left:1824.00px;top:376.80px" width="14" height="12" viewBox="0 0 14 12"><rect x="0.2" y="0.2" width="12.6" height="11" rx="1.4" fill="#fff"/><rect x="2.3" y="3.6" width="3.2" height="1.5" fill="#7f2fc9"/><rect x="7.6" y="3.6" width="3.2" height="1.5" fill="#7f2fc9"/><rect x="2.3" y="7.3" width="3.2" height="1.5" fill="#7f2fc9"/><rect x="7.6" y="7.3" width="3.2" height="1.5" fill="#7f2fc9"/></svg>
<svg style="position:absolute;left:1846.00px;top:377.80px" width="10" height="10" viewBox="0 0 10 10"><path d="M1 9 L8.3 1.7" stroke="#fff" stroke-width="1.3" stroke-linecap="round"/><path d="M4 1.2 L8.8 1.2 L8.8 6" fill="none" stroke="#fff" stroke-width="1.3" stroke-linejoin="miter"/></svg>
<svg style="position:absolute;left:0;top:0" width="1913" height="902"><rect x="1091" y="407" width="1" height="224" fill="#2d3034"/><rect x="1200" y="407" width="1" height="224" fill="#2d3034"/><rect x="1310" y="407" width="1" height="224" fill="#2d3034"/><rect x="1420" y="407" width="1" height="224" fill="#2d3034"/><rect x="1530" y="407" width="1" height="224" fill="#2d3034"/><rect x="1640" y="407" width="1" height="224" fill="#2d3034"/><rect x="1749" y="407" width="1" height="224" fill="#2d3034"/><rect x="1859" y="407" width="1" height="224" fill="#2d3034"/><rect x="1091.50" y="407.60" width="11.00" height="11.70" fill="#73BF69" fill-opacity="0.8" stroke="#73BF69" stroke-width="1"/><rect x="1103.50" y="407.60" width="35.50" height="11.70" fill="#F2CC0C" fill-opacity="0.8" stroke="#F2CC0C" stroke-width="1"/><rect x="1140.00" y="407.60" width="38.00" height="11.70" fill="#8AB8FF" fill-opacity="0.8" stroke="#8AB8FF" stroke-width="1"/><rect x="1179.00" y="407.60" width="34.50" height="11.70" fill="#FF780A" fill-opacity="0.8" stroke="#FF780A" stroke-width="1"/><rect x="1214.50" y="407.60" width="46.80" height="11.70" fill="#F2495C" fill-opacity="0.8" stroke="#F2495C" stroke-width="1"/><rect x="1262.30" y="407.60" width="42.20" height="11.70" fill="#5794F2" fill-opacity="0.8" stroke="#5794F2" stroke-width="1"/><rect x="1305.50" y="407.60" width="45.20" height="11.70" fill="#B877D9" fill-opacity="0.8" stroke="#B877D9" stroke-width="1"/><rect x="1351.70" y="407.60" width="42.70" height="11.70" fill="#705DA0" fill-opacity="0.8" stroke="#705DA0" stroke-width="1"/><rect x="1395.40" y="407.60" width="41.20" height="11.70" fill="#37872D" fill-opacity="0.8" stroke="#37872D" stroke-width="1"/><rect x="1437.60" y="407.60" width="56.80" height="11.70" fill="#FADE2A" fill-opacity="0.8" stroke="#FADE2A" stroke-width="1"/><rect x="1495.40" y="407.60" width="60.80" height="11.70" fill="#447EBC" fill-opacity="0.8" stroke="#447EBC" stroke-width="1"/><rect x="1557.20" y="407.60" width="55.00" height="11.70" fill="#C15C17" fill-opacity="0.8" stroke="#C15C17" stroke-width="1"/><rect x="1613.20" y="407.60" width="56.50" height="11.70" fill="#890F02" fill-opacity="0.8" stroke="#890F02" stroke-width="1"/><rect x="1670.70" y="407.60" width="55.80" height="11.70" fill="#0A437C" fill-opacity="0.8" stroke="#0A437C" stroke-width="1"/><rect x="1727.50" y="407.60" width="55.80" height="11.70" fill="#6D1F62" fill-opacity="0.8" stroke="#6D1F62" stroke-width="1"/><rect x="1091.60" y="430.68" width="13.80" height="11.70" fill="#73BF69" fill-opacity="0.8" stroke="#73BF69" stroke-width="1"/><rect x="1106.40" y="430.68" width="11.00" height="11.70" fill="#F2CC0C" fill-opacity="0.8" stroke="#F2CC0C" stroke-width="1"/><rect x="1118.40" y="430.68" width="11.10" height="11.70" fill="#8AB8FF" fill-opacity="0.8" stroke="#8AB8FF" stroke-width="1"/><rect x="1130.50" y="430.68" width="8.20" height="11.70" fill="#FF780A" fill-opacity="0.8" stroke="#FF780A" stroke-width="1"/><rect x="1139.70" y="430.68" width="10.90" height="11.70" fill="#F2495C" fill-opacity="0.8" stroke="#F2495C" stroke-width="1"/><rect x="1151.60" y="430.68" width="11.50" height="11.70" fill="#5794F2" fill-opacity="0.8" stroke="#5794F2" stroke-width="1"/><rect x="1164.10" y="430.68" width="17.40" height="11.70" fill="#B877D9" fill-opacity="0.8" stroke="#B877D9" stroke-width="1"/><rect x="1182.50" y="430.68" width="9.90" height="11.70" fill="#705DA0" fill-opacity="0.8" stroke="#705DA0" stroke-width="1"/><rect x="1193.40" y="430.68" width="7.90" height="11.70" fill="#37872D" fill-opacity="0.8" stroke="#37872D" stroke-width="1"/><rect x="1202.30" y="430.68" width="12.40" height="11.70" fill="#FADE2A" fill-opacity="0.8" stroke="#FADE2A" stroke-width="1"/><rect x="1215.70" y="430.68" width="13.80" height="11.70" fill="#447EBC" fill-opacity="0.8" stroke="#447EBC" stroke-width="1"/><rect x="1230.50" y="430.68" width="11.10" height="11.70" fill="#C15C17" fill-opacity="0.8" stroke="#C15C17" stroke-width="1"/><rect x="1242.60" y="430.68" width="11.80" height="11.70" fill="#890F02" fill-opacity="0.8" stroke="#890F02" stroke-width="1"/><rect x="1255.40" y="430.68" width="13.10" height="11.70" fill="#0A437C" fill-opacity="0.8" stroke="#0A437C" stroke-width="1"/><rect x="1269.50" y="430.68" width="8.90" height="11.70" fill="#6D1F62" fill-opacity="0.8" stroke="#6D1F62" stroke-width="1"/><rect x="1091.60" y="453.76" width="4.60" height="11.70" fill="#73BF69" fill-opacity="0.8" stroke="#73BF69" stroke-width="1"/><rect x="1097.20" y="453.76" width="9.30" height="11.70" fill="#F2CC0C" fill-opacity="0.8" stroke="#F2CC0C" stroke-width="1"/><rect x="1107.50" y="453.76" width="6.00" height="11.70" fill="#8AB8FF" fill-opacity="0.8" stroke="#8AB8FF" stroke-width="1"/><rect x="1114.50" y="453.76" width="11.00" height="11.70" fill="#FF780A" fill-opacity="0.8" stroke="#FF780A" stroke-width="1"/><rect x="1126.50" y="453.76" width="11.10" height="11.70" fill="#F2495C" fill-opacity="0.8" stroke="#F2495C" stroke-width="1"/><rect x="1138.60" y="453.76" width="7.90" height="11.70" fill="#5794F2" fill-opacity="0.8" stroke="#5794F2" stroke-width="1"/><rect x="1147.50" y="453.76" width="10.20" height="11.70" fill="#B877D9" fill-opacity="0.8" stroke="#B877D9" stroke-width="1"/><rect x="1158.70" y="453.76" width="8.70" height="11.70" fill="#705DA0" fill-opacity="0.8" stroke="#705DA0" stroke-width="1"/><rect x="1168.40" y="453.76" width="8.10" height="11.70" fill="#37872D" fill-opacity="0.8" stroke="#37872D" stroke-width="1"/><rect x="1177.50" y="453.76" width="10.20" height="11.70" fill="#FADE2A" fill-opacity="0.8" stroke="#FADE2A" stroke-width="1"/><rect x="1188.70" y="453.76" width="6.80" height="11.70" fill="#447EBC" fill-opacity="0.8" stroke="#447EBC" stroke-width="1"/><rect x="1196.50" y="453.76" width="9.30" height="11.70" fill="#C15C17" fill-opacity="0.8" stroke="#C15C17" stroke-width="1"/><rect x="1206.80" y="453.76" width="7.70" height="11.70" fill="#890F02" fill-opacity="0.8" stroke="#890F02" stroke-width="1"/><rect x="1215.50" y="453.76" width="8.10" height="11.70" fill="#0A437C" fill-opacity="0.8" stroke="#0A437C" stroke-width="1"/><rect x="1224.60" y="453.76" width="7.80" height="11.70" fill="#6D1F62" fill-opacity="0.8" stroke="#6D1F62" stroke-width="1"/><rect x="1091.60" y="476.84" width="6.80" height="11.70" fill="#73BF69" fill-opacity="0.8" stroke="#73BF69" stroke-width="1"/><rect x="1099.40" y="476.84" width="6.20" height="11.70" fill="#F2CC0C" fill-opacity="0.8" stroke="#F2CC0C" stroke-width="1"/><rect x="1106.60" y="476.84" width="4.90" height="11.70" fill="#8AB8FF" fill-opacity="0.8" stroke="#8AB8FF" stroke-width="1"/><rect x="1112.50" y="476.84" width="6.00" height="11.70" fill="#FF780A" fill-opacity="0.8" stroke="#FF780A" stroke-width="1"/><rect x="1119.50" y="476.84" width="7.00" height="11.70" fill="#F2495C" fill-opacity="0.8" stroke="#F2495C" stroke-width="1"/><rect x="1127.50" y="476.84" width="5.90" height="11.70" fill="#5794F2" fill-opacity="0.8" stroke="#5794F2" stroke-width="1"/><rect x="1134.40" y="476.84" width="5.20" height="11.70" fill="#B877D9" fill-opacity="0.8" stroke="#B877D9" stroke-width="1"/><rect x="1140.60" y="476.84" width="6.90" height="11.70" fill="#705DA0" fill-opacity="0.8" stroke="#705DA0" stroke-width="1"/><rect x="1148.50" y="476.84" width="6.00" height="11.70" fill="#37872D" fill-opacity="0.8" stroke="#37872D" stroke-width="1"/><rect x="1155.50" y="476.84" width="9.20" height="11.70" fill="#FADE2A" fill-opacity="0.8" stroke="#FADE2A" stroke-width="1"/><rect x="1165.70" y="476.84" width="6.60" height="11.70" fill="#447EBC" fill-opacity="0.8" stroke="#447EBC" stroke-width="1"/><rect x="1173.30" y="476.84" width="5.30" height="11.70" fill="#C15C17" fill-opacity="0.8" stroke="#C15C17" stroke-width="1"/><rect x="1179.60" y="476.84" width="6.00" height="11.70" fill="#890F02" fill-opacity="0.8" stroke="#890F02" stroke-width="1"/><rect x="1186.60" y="476.84" width="6.90" height="11.70" fill="#0A437C" fill-opacity="0.8" stroke="#0A437C" stroke-width="1"/><rect x="1194.50" y="476.84" width="5.80" height="11.70" fill="#6D1F62" fill-opacity="0.8" stroke="#6D1F62" stroke-width="1"/><rect x="1091.60" y="499.92" width="3.00" height="11.70" fill="#F2CC0C" fill-opacity="0.8" stroke="#F2CC0C" stroke-width="1"/><rect x="1095.60" y="499.92" width="2.80" height="11.70" fill="#8AB8FF" fill-opacity="0.8" stroke="#8AB8FF" stroke-width="1"/><rect x="1099.40" y="499.92" width="2.10" height="11.70" fill="#FF780A" fill-opacity="0.8" stroke="#FF780A" stroke-width="1"/><rect x="1102.50" y="499.92" width="4.00" height="11.70" fill="#F2495C" fill-opacity="0.8" stroke="#F2495C" stroke-width="1"/><rect x="1107.50" y="499.92" width="3.10" height="11.70" fill="#5794F2" fill-opacity="0.8" stroke="#5794F2" stroke-width="1"/><rect x="1111.60" y="499.92" width="4.10" height="11.70" fill="#B877D9" fill-opacity="0.8" stroke="#B877D9" stroke-width="1"/><rect x="1116.70" y="499.92" width="3.90" height="11.70" fill="#705DA0" fill-opacity="0.8" stroke="#705DA0" stroke-width="1"/><rect x="1121.60" y="499.92" width="2.90" height="11.70" fill="#37872D" fill-opacity="0.8" stroke="#37872D" stroke-width="1"/><rect x="1125.50" y="499.92" width="2.10" height="11.70" fill="#FADE2A" fill-opacity="0.8" stroke="#FADE2A" stroke-width="1"/><rect x="1128.60" y="499.92" width="4.00" height="11.70" fill="#447EBC" fill-opacity="0.8" stroke="#447EBC" stroke-width="1"/><rect x="1133.60" y="499.92" width="6.00" height="11.70" fill="#C15C17" fill-opacity="0.8" stroke="#C15C17" stroke-width="1"/><rect x="1140.60" y="499.92" width="12.90" height="11.70" fill="#890F02" fill-opacity="0.8" stroke="#890F02" stroke-width="1"/><rect x="1154.50" y="499.92" width="17.80" height="11.70" fill="#0A437C" fill-opacity="0.8" stroke="#0A437C" stroke-width="1"/><rect x="1173.30" y="499.92" width="10.00" height="11.70" fill="#6D1F62" fill-opacity="0.8" stroke="#6D1F62" stroke-width="1"/><rect x="1091.50" y="523.00" width="6.00" height="11.70" fill="#73BF69" fill-opacity="0.8" stroke="#73BF69" stroke-width="1"/><rect x="1098.50" y="523.00" width="3.90" height="11.70" fill="#F2CC0C" fill-opacity="0.8" stroke="#F2CC0C" stroke-width="1"/><rect x="1103.40" y="523.00" width="6.00" height="11.70" fill="#8AB8FF" fill-opacity="0.8" stroke="#8AB8FF" stroke-width="1"/><rect x="1109.90" y="522.50" width="1.00" height="12.70" fill="#FF780A"/><rect x="1110.90" y="522.50" width="0.90" height="12.70" fill="#F2495C"/><rect x="1111.80" y="522.50" width="1.90" height="12.70" fill="#5794F2"/><rect x="1114.20" y="523.00" width="6.40" height="11.70" fill="#B877D9" fill-opacity="0.8" stroke="#B877D9" stroke-width="1"/><rect x="1121.60" y="523.00" width="8.80" height="11.70" fill="#705DA0" fill-opacity="0.8" stroke="#705DA0" stroke-width="1"/><rect x="1131.40" y="523.00" width="7.90" height="11.70" fill="#37872D" fill-opacity="0.8" stroke="#37872D" stroke-width="1"/><rect x="1140.30" y="523.00" width="8.30" height="11.70" fill="#FADE2A" fill-opacity="0.8" stroke="#FADE2A" stroke-width="1"/><rect x="1149.60" y="523.00" width="2.70" height="11.70" fill="#447EBC" fill-opacity="0.8" stroke="#447EBC" stroke-width="1"/><rect x="1153.30" y="523.00" width="5.40" height="11.70" fill="#C15C17" fill-opacity="0.8" stroke="#C15C17" stroke-width="1"/><rect x="1159.70" y="523.00" width="5.90" height="11.70" fill="#890F02" fill-opacity="0.8" stroke="#890F02" stroke-width="1"/><rect x="1166.60" y="523.00" width="5.90" height="11.70" fill="#0A437C" fill-opacity="0.8" stroke="#0A437C" stroke-width="1"/><rect x="1173.50" y="523.00" width="4.10" height="11.70" fill="#6D1F62" fill-opacity="0.8" stroke="#6D1F62" stroke-width="1"/><rect x="1091.50" y="546.08" width="6.60" height="11.70" fill="#73BF69" fill-opacity="0.8" stroke="#73BF69" stroke-width="1"/><rect x="1099.10" y="546.08" width="5.40" height="11.70" fill="#F2CC0C" fill-opacity="0.8" stroke="#F2CC0C" stroke-width="1"/><rect x="1105.50" y="546.08" width="4.10" height="11.70" fill="#8AB8FF" fill-opacity="0.8" stroke="#8AB8FF" stroke-width="1"/><rect x="1110.60" y="546.08" width="6.00" height="11.70" fill="#FF780A" fill-opacity="0.8" stroke="#FF780A" stroke-width="1"/><rect x="1117.60" y="546.08" width="6.80" height="11.70" fill="#F2495C" fill-opacity="0.8" stroke="#F2495C" stroke-width="1"/><rect x="1125.40" y="546.08" width="5.00" height="11.70" fill="#5794F2" fill-opacity="0.8" stroke="#5794F2" stroke-width="1"/><rect x="1131.40" y="546.08" width="6.30" height="11.70" fill="#B877D9" fill-opacity="0.8" stroke="#B877D9" stroke-width="1"/><rect x="1138.70" y="546.08" width="4.50" height="11.70" fill="#705DA0" fill-opacity="0.8" stroke="#705DA0" stroke-width="1"/><rect x="1143.70" y="545.58" width="1.50" height="12.70" fill="#FADE2A"/><rect x="1145.70" y="546.08" width="3.80" height="11.70" fill="#447EBC" fill-opacity="0.8" stroke="#447EBC" stroke-width="1"/><rect x="1150.50" y="546.08" width="7.30" height="11.70" fill="#C15C17" fill-opacity="0.8" stroke="#C15C17" stroke-width="1"/><rect x="1158.80" y="546.08" width="4.80" height="11.70" fill="#890F02" fill-opacity="0.8" stroke="#890F02" stroke-width="1"/><rect x="1164.60" y="546.08" width="7.00" height="11.70" fill="#0A437C" fill-opacity="0.8" stroke="#0A437C" stroke-width="1"/><rect x="1172.60" y="546.08" width="4.00" height="11.70" fill="#6D1F62" fill-opacity="0.8" stroke="#6D1F62" stroke-width="1"/><rect x="1091.50" y="569.16" width="1.90" height="11.70" fill="#73BF69" fill-opacity="0.8" stroke="#73BF69" stroke-width="1"/><rect x="1094.40" y="569.16" width="1.20" height="11.70" fill="#F2CC0C" fill-opacity="0.8" stroke="#F2CC0C" stroke-width="1"/><rect x="1096.10" y="568.66" width="1.00" height="12.70" fill="#8AB8FF"/><rect x="1097.60" y="569.16" width="3.10" height="11.70" fill="#FF780A" fill-opacity="0.8" stroke="#FF780A" stroke-width="1"/><rect x="1101.70" y="569.16" width="2.80" height="11.70" fill="#F2495C" fill-opacity="0.8" stroke="#F2495C" stroke-width="1"/><rect x="1105.50" y="569.16" width="4.10" height="11.70" fill="#5794F2" fill-opacity="0.8" stroke="#5794F2" stroke-width="1"/><rect x="1110.60" y="569.16" width="4.10" height="11.70" fill="#B877D9" fill-opacity="0.8" stroke="#B877D9" stroke-width="1"/><rect x="1115.70" y="569.16" width="13.80" height="11.70" fill="#705DA0" fill-opacity="0.8" stroke="#705DA0" stroke-width="1"/><rect x="1130.50" y="569.16" width="8.80" height="11.70" fill="#37872D" fill-opacity="0.8" stroke="#37872D" stroke-width="1"/><rect x="1140.30" y="569.16" width="10.30" height="11.70" fill="#FADE2A" fill-opacity="0.8" stroke="#FADE2A" stroke-width="1"/><rect x="1151.60" y="569.16" width="3.00" height="11.70" fill="#447EBC" fill-opacity="0.8" stroke="#447EBC" stroke-width="1"/><rect x="1155.60" y="569.16" width="2.50" height="11.70" fill="#C15C17" fill-opacity="0.8" stroke="#C15C17" stroke-width="1"/><rect x="1158.60" y="568.66" width="0.60" height="12.70" fill="#890F02"/><rect x="1159.20" y="568.66" width="1.90" height="12.70" fill="#0A437C"/><rect x="1161.10" y="568.66" width="1.90" height="12.70" fill="#6D1F62"/><rect x="1091.00" y="591.74" width="1.90" height="12.70" fill="#F2CC0C"/><rect x="1093.40" y="592.24" width="2.20" height="11.70" fill="#8AB8FF" fill-opacity="0.8" stroke="#8AB8FF" stroke-width="1"/><rect x="1096.60" y="592.24" width="2.30" height="11.70" fill="#FF780A" fill-opacity="0.8" stroke="#FF780A" stroke-width="1"/><rect x="1099.90" y="592.24" width="3.70" height="11.70" fill="#5794F2" fill-opacity="0.8" stroke="#5794F2" stroke-width="1"/><rect x="1104.60" y="592.24" width="3.20" height="11.70" fill="#B877D9" fill-opacity="0.8" stroke="#B877D9" stroke-width="1"/><rect x="1108.80" y="592.24" width="8.60" height="11.70" fill="#705DA0" fill-opacity="0.8" stroke="#705DA0" stroke-width="1"/><rect x="1118.40" y="592.24" width="5.00" height="11.70" fill="#37872D" fill-opacity="0.8" stroke="#37872D" stroke-width="1"/><rect x="1124.40" y="592.24" width="2.20" height="11.70" fill="#FADE2A" fill-opacity="0.8" stroke="#FADE2A" stroke-width="1"/><rect x="1127.60" y="592.24" width="4.10" height="11.70" fill="#447EBC" fill-opacity="0.8" stroke="#447EBC" stroke-width="1"/><rect x="1132.70" y="592.24" width="6.90" height="11.70" fill="#C15C17" fill-opacity="0.8" stroke="#C15C17" stroke-width="1"/><rect x="1140.60" y="592.24" width="3.80" height="11.70" fill="#890F02" fill-opacity="0.8" stroke="#890F02" stroke-width="1"/><rect x="1145.40" y="592.24" width="5.20" height="11.70" fill="#0A437C" fill-opacity="0.8" stroke="#0A437C" stroke-width="1"/><rect x="1151.60" y="592.24" width="5.80" height="11.70" fill="#6D1F62" fill-opacity="0.8" stroke="#6D1F62" stroke-width="1"/><rect x="1091.50" y="615.32" width="6.00" height="11.70" fill="#73BF69" fill-opacity="0.8" stroke="#73BF69" stroke-width="1"/><rect x="1098.50" y="615.32" width="4.10" height="11.70" fill="#F2CC0C" fill-opacity="0.8" stroke="#F2CC0C" stroke-width="1"/><rect x="1103.60" y="615.32" width="1.90" height="11.70" fill="#8AB8FF" fill-opacity="0.8" stroke="#8AB8FF" stroke-width="1"/><rect x="1106.50" y="615.32" width="1.80" height="11.70" fill="#FF780A" fill-opacity="0.8" stroke="#FF780A" stroke-width="1"/><rect x="1109.30" y="615.32" width="1.10" height="11.70" fill="#5794F2" fill-opacity="0.8" stroke="#5794F2" stroke-width="1"/><rect x="1111.40" y="615.32" width="3.30" height="11.70" fill="#B877D9" fill-opacity="0.8" stroke="#B877D9" stroke-width="1"/><rect x="1115.70" y="615.32" width="1.70" height="11.70" fill="#705DA0" fill-opacity="0.8" stroke="#705DA0" stroke-width="1"/><rect x="1118.40" y="615.32" width="4.00" height="11.70" fill="#37872D" fill-opacity="0.8" stroke="#37872D" stroke-width="1"/><rect x="1123.40" y="615.32" width="2.20" height="11.70" fill="#FADE2A" fill-opacity="0.8" stroke="#FADE2A" stroke-width="1"/><rect x="1126.60" y="615.32" width="2.90" height="11.70" fill="#447EBC" fill-opacity="0.8" stroke="#447EBC" stroke-width="1"/><rect x="1130.50" y="615.32" width="1.20" height="11.70" fill="#6D1F62" fill-opacity="0.8" stroke="#6D1F62" stroke-width="1"/></svg>
<div class="t" style="right:837.40px;top:406.54px;font-size:12px;color:#ccccdc;font-weight:normal;letter-spacing:0px;-webkit-text-stroke:0.15px #ccccdc;">man_<span style="margin-left:-1.03px;margin-right:-1.26px">1</span><span style="margin-right:0.95px">6</span><span style="margin-right:0.95px">4</span><span style="margin-right:0.95px">4</span><span style="margin-right:0.95px">9</span><span style="margin-left:-1.03px;margin-right:-1.26px">1</span><span style="margin-right:0.95px">2</span><span style="margin-right:0.95px">3</span><span style="margin-right:0.95px">3</span>1</div>
<div class="t" style="right:837.40px;top:429.62px;font-size:12px;color:#ccccdc;font-weight:normal;letter-spacing:0px;-webkit-text-stroke:0.15px #ccccdc;">man_<span style="margin-right:0.95px">2</span><span style="margin-left:-1.03px;margin-right:-1.26px">1</span><span style="margin-right:0.95px">2</span><span style="margin-right:0.95px">8</span><span style="margin-right:0.95px">3</span><span style="margin-right:0.95px">4</span><span style="margin-right:0.95px">0</span><span style="margin-right:0.95px">2</span><span style="margin-right:0.95px">3</span>3</div>
<div class="t" style="right:837.40px;top:452.70px;font-size:12px;color:#ccccdc;font-weight:normal;letter-spacing:0px;-webkit-text-stroke:0.15px #ccccdc;">man_<span style="margin-right:0.95px">0</span><span style="margin-left:-1.03px;margin-right:-1.26px">1</span><span style="margin-right:0.95px">2</span><span style="margin-right:0.95px">4</span><span style="margin-right:0.95px">4</span><span style="margin-right:0.95px">9</span><span style="margin-right:0.95px">5</span><span style="margin-right:0.95px">0</span><span style="margin-right:0.95px">4</span>3</div>
<div class="t" style="right:837.40px;top:475.78px;font-size:12px;color:#ccccdc;font-weight:normal;letter-spacing:0px;-webkit-text-stroke:0.15px #ccccdc;">man_<span style="margin-right:0.95px">0</span><span style="margin-right:0.95px">8</span><span style="margin-right:0.95px">6</span><span style="margin-right:0.95px">4</span><span style="margin-right:0.95px">7</span><span style="margin-right:0.95px">9</span><span style="margin-right:0.95px">9</span><span style="margin-left:-1.03px;margin-right:-1.26px">1</span><span style="margin-right:0.95px">5</span>6</div>
<div class="t" style="right:837.40px;top:498.86px;font-size:12px;color:#ccccdc;font-weight:normal;letter-spacing:0px;-webkit-text-stroke:0.15px #ccccdc;">man_<span style="margin-left:-1.03px;margin-right:-1.26px">1</span><span style="margin-right:0.95px">7</span><span style="margin-right:0.95px">4</span><span style="margin-right:0.95px">2</span><span style="margin-right:0.95px">2</span><span style="margin-right:0.95px">4</span><span style="margin-right:0.95px">2</span><span style="margin-left:-1.03px;margin-right:-1.26px">1</span><span style="margin-right:0.95px">3</span>5</div>
<div class="t" style="right:837.40px;top:521.94px;font-size:12px;color:#ccccdc;font-weight:normal;letter-spacing:0px;-webkit-text-stroke:0.15px #ccccdc;">man_<span style="margin-left:-1.03px;margin-right:-1.26px">1</span><span style="margin-right:0.95px">9</span><span style="margin-right:0.95px">4</span><span style="margin-right:0.95px">8</span><span style="margin-left:-1.03px;margin-right:-1.26px">1</span><span style="margin-right:0.95px">9</span><span style="margin-right:0.95px">2</span><span style="margin-right:0.95px">0</span><span style="margin-right:0.95px">0</span>0</div>
<div class="t" style="right:837.40px;top:545.02px;font-size:12px;color:#ccccdc;font-weight:normal;letter-spacing:0px;-webkit-text-stroke:0.15px #ccccdc;">man_<span style="margin-left:-1.03px;margin-right:-1.26px">1</span><span style="margin-right:0.95px">9</span><span style="margin-right:0.95px">9</span><span style="margin-right:0.95px">3</span><span style="margin-right:0.95px">4</span><span style="margin-left:-1.03px;margin-right:-1.26px">1</span><span style="margin-right:0.95px">2</span><span style="margin-right:0.95px">0</span><span style="margin-right:0.95px">6</span>0</div>
<div class="t" style="right:837.40px;top:568.10px;font-size:12px;color:#ccccdc;font-weight:normal;letter-spacing:0px;-webkit-text-stroke:0.15px #ccccdc;">man_<span style="margin-left:-1.03px;margin-right:-1.26px">1</span><span style="margin-right:0.95px">0</span><span style="margin-right:0.95px">9</span><span style="margin-left:-1.03px;margin-right:-1.26px">1</span><span style="margin-right:0.95px">9</span><span style="margin-right:0.95px">6</span><span style="margin-right:0.95px">2</span><span style="margin-right:0.95px">6</span><span style="margin-right:0.95px">6</span>7</div>
<div class="t" style="right:837.40px;top:591.18px;font-size:12px;color:#ccccdc;font-weight:normal;letter-spacing:0px;-webkit-text-stroke:0.15px #ccccdc;">man_<span style="margin-right:0.95px">0</span><span style="margin-right:0.95px">2</span><span style="margin-right:0.95px">5</span><span style="margin-right:0.95px">3</span><span style="margin-right:0.95px">2</span><span style="margin-right:0.95px">7</span><span style="margin-left:-1.03px;margin-right:-1.26px">1</span><span style="margin-right:0.95px">7</span><span style="margin-right:0.95px">5</span>5</div>
<div class="t" style="right:837.40px;top:614.26px;font-size:12px;color:#ccccdc;font-weight:normal;letter-spacing:0px;-webkit-text-stroke:0.15px #ccccdc;">man_<span style="margin-left:-1.03px;margin-right:-1.26px">1</span><span style="margin-right:0.95px">4</span><span style="margin-right:0.95px">6</span><span style="margin-left:-1.03px;margin-right:-1.26px">1</span><span style="margin-right:0.95px">5</span><span style="margin-right:0.95px">6</span><span style="margin-right:0.95px">6</span><span style="margin-right:0.95px">3</span><span style="margin-right:0.95px">8</span>0</div>
<div class="t" style="left:691.00px;width:800px;text-align:center;top:636.04px;font-size:12px;color:#ccccdc;font-weight:normal;letter-spacing:0px;-webkit-text-stroke:0.15px #ccccdc;"><span style="margin-right:1.05px">0</span> AED</div>
<div class="t" style="left:910.60px;width:800px;text-align:center;top:636.04px;font-size:12px;color:#ccccdc;font-weight:normal;letter-spacing:0px;-webkit-text-stroke:0.15px #ccccdc;"><span style="margin-left:-0.99px;margin-right:-1.21px">1</span><span style="margin-right:1.05px">0</span><span style="margin-right:1.05px">0</span><span style="margin-right:1.05px">0</span><span style="margin-right:1.05px">0</span><span style="margin-right:1.05px">0</span><span style="margin-right:1.05px">0</span><span style="margin-right:1.05px">0</span> AED</div>
<div class="t" style="left:1130.20px;width:800px;text-align:center;top:636.04px;font-size:12px;color:#ccccdc;font-weight:normal;letter-spacing:0px;-webkit-text-stroke:0.15px #ccccdc;"><span style="margin-right:1.05px">2</span><span style="margin-right:1.05px">0</span><span style="margin-right:1.05px">0</span><span style="margin-right:1.05px">0</span><span style="margin-right:1.05px">0</span><span style="margin-right:1.05px">0</span><span style="margin-right:1.05px">0</span><span style="margin-right:1.05px">0</span> AED</div>
<div class="t" style="left:1349.80px;width:800px;text-align:center;top:636.04px;font-size:12px;color:#ccccdc;font-weight:normal;letter-spacing:0px;-webkit-text-stroke:0.15px #ccccdc;"><span style="margin-right:1.05px">3</span><span style="margin-right:1.05px">0</span><span style="margin-right:1.05px">0</span><span style="margin-right:1.05px">0</span><span style="margin-right:1.05px">0</span><span style="margin-right:1.05px">0</span><span style="margin-right:1.05px">0</span><span style="margin-right:1.05px">0</span> AED</div>
<div class="t" style="left:37.10px;top:683.45px;font-size:14px;color:#ccccdc;font-weight:normal;letter-spacing:0.62px;-webkit-text-stroke:0.4px #ccccdc;">Sales by All Division Monthly</div>
<div style="position:absolute;left:879.00px;top:683.00px;width:56px;height:32px;border-radius:4px;background:linear-gradient(135deg,#a24ee2 0%,#8a36d2 50%,#7a2bc3 100%);box-shadow:0 1px 3px rgba(0,0,0,0.5)"></div>
<svg style="position:absolute;left:891.00px;top:693.00px" width="14" height="12" viewBox="0 0 14 12"><rect x="0.2" y="0.2" width="12.6" height="11" rx="1.4" fill="#fff"/><rect x="2.3" y="3.6" width="3.2" height="1.5" fill="#7f2fc9"/><rect x="7.6" y="3.6" width="3.2" height="1.5" fill="#7f2fc9"/><rect x="2.3" y="7.3" width="3.2" height="1.5" fill="#7f2fc9"/><rect x="7.6" y="7.3" width="3.2" height="1.5" fill="#7f2fc9"/></svg>
<svg style="position:absolute;left:913.00px;top:694.00px" width="10" height="10" viewBox="0 0 10 10"><path d="M1 9 L8.3 1.7" stroke="#fff" stroke-width="1.3" stroke-linecap="round"/><path d="M4 1.2 L8.8 1.2 L8.8 6" fill="none" stroke="#fff" stroke-width="1.3" stroke-linejoin="miter"/></svg>
<svg style="position:absolute;left:0;top:0" width="1913" height="902"><rect x="150" y="722" width="1" height="200" fill="#2d3034"/><rect x="287" y="722" width="1" height="200" fill="#2d3034"/><rect x="424" y="722" width="1" height="200" fill="#2d3034"/><rect x="560" y="722" width="1" height="200" fill="#2d3034"/><rect x="697" y="722" width="1" height="200" fill="#2d3034"/><rect x="833" y="722" width="1" height="200" fill="#2d3034"/><rect x="150.80" y="722" width="5.00" height="14" fill="#73BF69"/><rect x="155.80" y="722" width="7.40" height="14" fill="#F2CC0C"/><rect x="163.20" y="722" width="4.70" height="14" fill="#8AB8FF"/><rect x="167.90" y="722" width="4.00" height="14" fill="#FF780A"/><rect x="171.90" y="722" width="6.30" height="14" fill="#F2495C"/><rect x="178.20" y="722" width="6.00" height="14" fill="#5794F2"/><rect x="184.20" y="722" width="6.10" height="14" fill="#B877D9"/><rect x="190.30" y="722" width="6.50" height="14" fill="#705DA0"/><rect x="196.80" y="722" width="7.90" height="14" fill="#37872D"/><rect x="204.70" y="722" width="9.70" height="14" fill="#FADE2A"/><rect x="214.40" y="722" width="8.70" height="14" fill="#447EBC"/><rect x="223.10" y="722" width="10.20" height="14" fill="#C15C17"/><rect x="233.30" y="722" width="10.00" height="14" fill="#890F02"/><rect x="243.30" y="722" width="8.70" height="14" fill="#0A437C"/><rect x="252.00" y="722" width="10.00" height="14" fill="#6D1F62"/><rect x="150.80" y="774" width="43.90" height="14" fill="#73BF69"/><rect x="194.70" y="774" width="42.30" height="14" fill="#F2CC0C"/><rect x="237.00" y="774" width="39.20" height="14" fill="#8AB8FF"/><rect x="276.20" y="774" width="33.90" height="14" fill="#FF780A"/><rect x="310.10" y="774" width="41.70" height="14" fill="#F2495C"/><rect x="351.80" y="774" width="40.20" height="14" fill="#5794F2"/><rect x="392.00" y="774" width="49.20" height="14" fill="#B877D9"/><rect x="441.20" y="774" width="46.70" height="14" fill="#705DA0"/><rect x="487.90" y="774" width="42.00" height="14" fill="#37872D"/><rect x="529.90" y="774" width="52.00" height="14" fill="#FADE2A"/><rect x="581.90" y="774" width="57.10" height="14" fill="#447EBC"/><rect x="639.00" y="774" width="53.00" height="14" fill="#C15C17"/><rect x="692.00" y="774" width="52.00" height="14" fill="#890F02"/><rect x="744.00" y="774" width="51.00" height="14" fill="#0A437C"/><rect x="795.00" y="774" width="53.10" height="14" fill="#6D1F62"/><rect x="150.8" y="824.7" width="1.4" height="14" fill="#C15C17"/><rect x="150.80" y="877" width="4.00" height="14" fill="#73BF69"/><rect x="154.80" y="877" width="6.30" height="14" fill="#F2CC0C"/><rect x="161.10" y="877" width="3.70" height="14" fill="#8AB8FF"/><rect x="164.80" y="877" width="8.10" height="14" fill="#FF780A"/><rect x="172.90" y="877" width="6.80" height="14" fill="#F2495C"/><rect x="179.70" y="877" width="6.30" height="14" fill="#5794F2"/><rect x="186.00" y="877" width="6.90" height="14" fill="#B877D9"/><rect x="192.90" y="877" width="5.80" height="14" fill="#705DA0"/><rect x="198.70" y="877" width="6.00" height="14" fill="#37872D"/><rect x="204.70" y="877" width="8.90" height="14" fill="#FADE2A"/><rect x="213.60" y="877" width="4.00" height="14" fill="#447EBC"/><rect x="217.60" y="877" width="7.90" height="14" fill="#C15C17"/><rect x="225.50" y="877" width="8.60" height="14" fill="#890F02"/><rect x="234.10" y="877" width="9.80" height="14" fill="#0A437C"/><rect x="243.90" y="877" width="9.90" height="14" fill="#6D1F62"/></svg>
<div class="t" style="right:1777.40px;top:722.84px;font-size:12px;color:#ccccdc;font-weight:normal;letter-spacing:0px;-webkit-text-stroke:0.15px #ccccdc;">div_<span style="margin-right:0.76px">0</span><span style="margin-right:0.76px">0</span><span style="margin-right:0.76px">9</span><span style="margin-right:0.76px">7</span><span style="margin-right:0.76px">9</span><span style="margin-right:0.76px">2</span><span style="margin-right:0.76px">6</span><span style="margin-right:0.76px">0</span><span style="margin-right:0.76px">5</span>4</div>
<div class="t" style="right:1777.40px;top:774.84px;font-size:12px;color:#ccccdc;font-weight:normal;letter-spacing:0px;-webkit-text-stroke:0.15px #ccccdc;">div_<span style="margin-right:0.76px">0</span><span style="margin-right:0.76px">5</span><span style="margin-right:0.76px">5</span><span style="margin-right:0.76px">6</span><span style="margin-right:0.76px">0</span><span style="margin-right:0.76px">0</span><span style="margin-right:0.76px">3</span><span style="margin-right:0.76px">7</span><span style="margin-right:0.76px">9</span>3</div>
<div class="t" style="right:1777.40px;top:825.54px;font-size:12px;color:#ccccdc;font-weight:normal;letter-spacing:0px;-webkit-text-stroke:0.15px #ccccdc;">div_<span style="margin-left:-1.22px;margin-right:-1.49px">1</span><span style="margin-right:0.76px">4</span><span style="margin-right:0.76px">3</span><span style="margin-right:0.76px">4</span><span style="margin-right:0.76px">7</span><span style="margin-right:0.76px">6</span><span style="margin-right:0.76px">4</span><span style="margin-right:0.76px">8</span><span style="margin-right:0.76px">9</span>7</div>
<div class="t" style="right:1777.40px;top:877.84px;font-size:12px;color:#ccccdc;font-weight:normal;letter-spacing:0px;-webkit-text-stroke:0.15px #ccccdc;">div_<span style="margin-left:-1.22px;margin-right:-1.49px">1</span><span style="margin-right:0.76px">7</span><span style="margin-right:0.76px">4</span><span style="margin-right:0.76px">2</span><span style="margin-right:0.76px">4</span><span style="margin-right:0.76px">4</span><span style="margin-right:0.76px">9</span><span style="margin-right:0.76px">7</span><span style="margin-left:-1.22px;margin-right:-1.49px">1</span>6</div>
<div class="t" style="left:970.20px;top:683.45px;font-size:14px;color:#ccccdc;font-weight:normal;letter-spacing:0.46px;-webkit-text-stroke:0.4px #ccccdc;">Salesman Sales Trend</div>
<div style="position:absolute;left:1812.00px;top:683.00px;width:56px;height:32px;border-radius:4px;background:linear-gradient(135deg,#a24ee2 0%,#8a36d2 50%,#7a2bc3 100%);box-shadow:0 1px 3px rgba(0,0,0,0.5)"></div>
<svg style="position:absolute;left:1824.00px;top:693.00px" width="14" height="12" viewBox="0 0 14 12"><rect x="0.2" y="0.2" width="12.6" height="11" rx="1.4" fill="#fff"/><rect x="2.3" y="3.6" width="3.2" height="1.5" fill="#7f2fc9"/><rect x="7.6" y="3.6" width="3.2" height="1.5" fill="#7f2fc9"/><rect x="2.3" y="7.3" width="3.2" height="1.5" fill="#7f2fc9"/><rect x="7.6" y="7.3" width="3.2" height="1.5" fill="#7f2fc9"/></svg>
<svg style="position:absolute;left:1846.00px;top:694.00px" width="10" height="10" viewBox="0 0 10 10"><path d="M1 9 L8.3 1.7" stroke="#fff" stroke-width="1.3" stroke-linecap="round"/><path d="M4 1.2 L8.8 1.2 L8.8 6" fill="none" stroke="#fff" stroke-width="1.3" stroke-linejoin="miter"/></svg>
<svg style="position:absolute;left:0;top:0" width="1913" height="902"><defs><linearGradient id="gf" x1="0" y1="0" x2="0" y2="1"><stop offset="0" stop-color="#73BF69" stop-opacity="0.2"/><stop offset="1" stop-color="#73BF69" stop-opacity="0.02"/></linearGradient><linearGradient id="pf" x1="0" y1="0" x2="0" y2="1"><stop offset="0" stop-color="#CA95E5" stop-opacity="0.22"/><stop offset="1" stop-color="#CA95E5" stop-opacity="0.06"/></linearGradient></defs><rect x="1049" y="774" width="812.4" height="1" fill="#2d3034"/><rect x="1049" y="831" width="812.4" height="1" fill="#2d3034"/><rect x="1049" y="888" width="812.4" height="1" fill="#2d3034"/><rect x="1049" y="722" width="1" height="200" fill="#2d3034"/><rect x="1152" y="722" width="1" height="200" fill="#2d3034"/><rect x="1258" y="722" width="1" height="200" fill="#2d3034"/><rect x="1363" y="722" width="1" height="200" fill="#2d3034"/><rect x="1470" y="722" width="1" height="200" fill="#2d3034"/><rect x="1575" y="722" width="1" height="200" fill="#2d3034"/><rect x="1680" y="722" width="1" height="200" fill="#2d3034"/><rect x="1782" y="722" width="1" height="200" fill="#2d3034"/><path d="M1101.60 799.00 C1119.10 818.00 1136.60 843.48 1154.10 856.00 C1171.60 868.52 1189.10 878.20 1206.60 884.00 C1222.40 889.24 1238.20 895.50 1254.00 895.50 C1273.20 895.50 1292.40 845.80 1311.60 845.80 C1328.40 845.80 1345.20 873.00 1362.00 873.00 C1380.20 873.00 1398.40 807.13 1416.60 796.00 C1434.10 785.30 1451.60 775.40 1469.10 775.40 C1486.60 775.40 1504.10 829.20 1521.60 829.20 C1539.10 829.20 1556.60 741.20 1574.10 741.20 C1591.60 741.20 1609.10 768.99 1626.60 777.00 C1644.10 785.01 1661.60 789.07 1679.10 795.10 L1679.1 920 L1101.6 920 Z" fill="url(#gf)"/><path d="M1101.60 799.00 C1119.10 818.00 1136.60 843.48 1154.10 856.00 C1171.60 868.52 1189.10 878.20 1206.60 884.00 C1222.40 889.24 1238.20 895.50 1254.00 895.50 C1273.20 895.50 1292.40 845.80 1311.60 845.80 C1328.40 845.80 1345.20 873.00 1362.00 873.00 C1380.20 873.00 1398.40 807.13 1416.60 796.00 C1434.10 785.30 1451.60 775.40 1469.10 775.40 C1486.60 775.40 1504.10 829.20 1521.60 829.20 C1539.10 829.20 1556.60 741.20 1574.10 741.20 C1591.60 741.20 1609.10 768.99 1626.60 777.00 C1644.10 785.01 1661.60 789.07 1679.10 795.10" fill="none" stroke="#73BF69" stroke-width="5" stroke-linecap="butt" stroke-linejoin="round"/><path d="M1679.10 745.00 C1696.40 759.67 1713.70 789.00 1731.00 789.00 C1748.10 789.00 1765.20 760.33 1782.30 746.00 L1782.3 920 L1679.1 920 Z" fill="url(#pf)"/><path d="M1679.10 745.00 C1696.40 759.67 1713.70 789.00 1731.00 789.00 C1748.10 789.00 1765.20 760.33 1782.30 746.00" fill="none" stroke="#CA95E5" stroke-width="5" stroke-dasharray="11.2 7.4"/></svg>
<div class="t" style="right:869.20px;top:767.84px;font-size:12px;color:#ccccdc;font-weight:normal;letter-spacing:0px;-webkit-text-stroke:0.15px #ccccdc;"><span style="margin-right:1.0px">0</span><span style="margin-right:1.0px">0</span><span style="margin-right:1.0px">0</span><span style="margin-right:1.0px">0</span><span style="margin-right:1.0px">0</span><span style="margin-right:1.0px">0</span> AED</div>
<div class="t" style="right:869.20px;top:825.14px;font-size:12px;color:#ccccdc;font-weight:normal;letter-spacing:0px;-webkit-text-stroke:0.15px #ccccdc;"><span style="margin-right:1.0px">0</span><span style="margin-right:1.0px">0</span><span style="margin-right:1.0px">0</span><span style="margin-right:1.0px">0</span><span style="margin-right:1.0px">0</span><span style="margin-right:1.0px">0</span> AED</div>
<div class="t" style="right:869.20px;top:882.34px;font-size:12px;color:#ccccdc;font-weight:normal;letter-spacing:0px;-webkit-text-stroke:0.15px #ccccdc;"><span style="margin-right:1.0px">0</span><span style="margin-right:1.0px">0</span><span style="margin-right:1.0px">0</span><span style="margin-right:1.0px">0</span><span style="margin-right:1.0px">0</span><span style="margin-right:1.0px">0</span> AED</div>
<div style="position:absolute;left:1825px;top:832.8px;width:60px;height:60px;border-radius:50%;background:linear-gradient(135deg,#7426c6 0%,#9a5ad4 55%,#c594df 100%);box-shadow:0 2px 6px rgba(0,0,0,0.35)"></div>
<svg style="position:absolute;left:1835px;top:845px" width="40" height="35" viewBox="0 0 40 35"><ellipse cx="25.5" cy="21.4" rx="9.8" ry="7.4" fill="#fff"/><path d="M30 25 L34.5 28.8 L26.5 28 Z" fill="#fff"/><ellipse cx="16" cy="14.8" rx="11.2" ry="8.9" fill="#9553d2"/><ellipse cx="16" cy="14.8" rx="10" ry="7.8" fill="#fff"/><path d="M9.5 20 L6.2 23.2 L14 21.8 Z" fill="#fff"/></svg>
<div style="position:absolute;left:1905.00px;top:2.00px;width:8.00px;height:900.00px;background:#2e2e2e"></div>
<svg style="position:absolute;left:1905px;top:0px" width="8" height="16"><path d="M8.2 7 L13.6 13.8 L2.8 13.8 Z" fill="#a8a8a8" stroke="#a8a8a8" stroke-width="0.6" stroke-linejoin="round"/></svg>
<div style="position:absolute;left:1908.00px;top:65.60px;width:8.00px;height:436.50px;background:#a8a8a8;border-radius:4px"></div>
</body></html>
